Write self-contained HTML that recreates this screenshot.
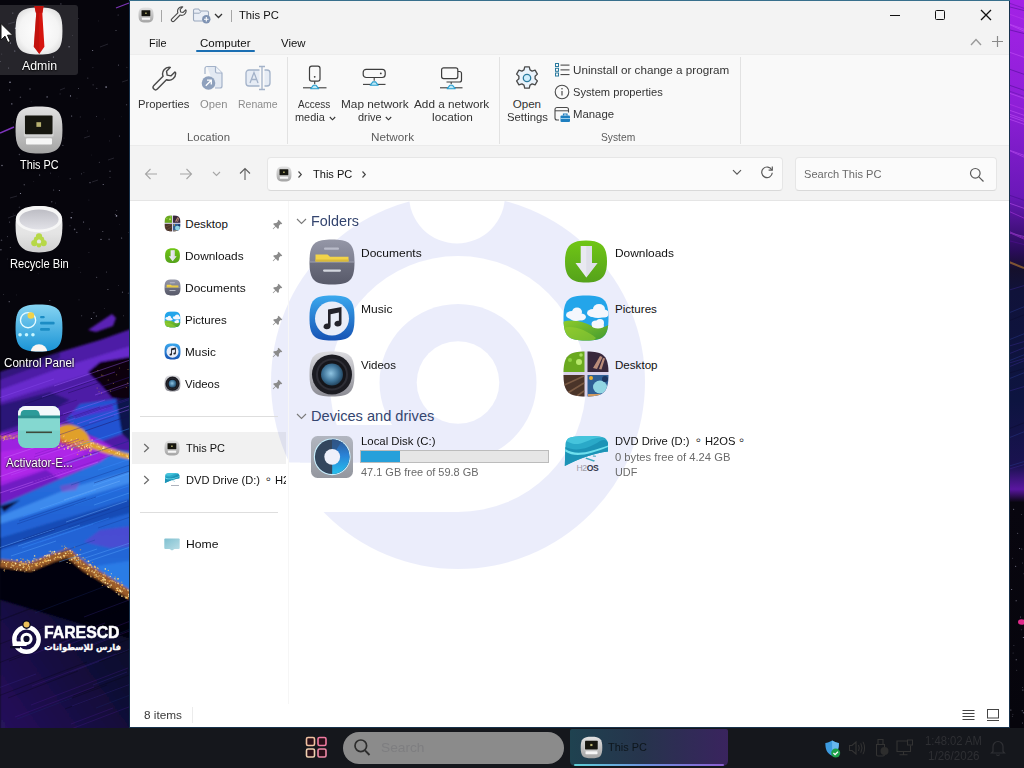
<!DOCTYPE html>
<html lang="en">
<head>
<meta charset="utf-8">
<title>This PC</title>
<style>
*{box-sizing:border-box;margin:0;padding:0}
html,body{width:1024px;height:768px;overflow:hidden;background:#06050c}
body{position:relative;font-family:"Liberation Sans","DejaVu Sans",sans-serif;font-size:11.6px;color:#111}
.a{position:absolute}
.t{position:absolute;white-space:nowrap;line-height:14px;height:14px;display:block;transform-origin:0 50%}
.rb{color:#333}
.g{color:#8c8c8c}
.sub{color:#6a6a6a}
.lb{color:#5c5c5c}
.hd{color:#34456f;font-size:14.6px}
.dt{color:#fff;font-size:12px;text-shadow:0 1px 2px rgba(0,0,0,.9),0 0 2px rgba(0,0,0,.8)}
#win{position:absolute;left:129px;top:0;width:881px;height:728px;background:#17324c;border-top:1px solid #376f8c}
#winin{position:absolute;left:1px;top:0;width:879px;height:726px;background:#f3f3f3;overflow:hidden}
#pg{position:absolute;left:-130px;top:-1px;width:1024px;height:768px}
.box{position:absolute;background:#fbfbfb;border:1px solid #e6e6e6;border-bottom-color:#d9d9d9;border-radius:4px}
.sep{position:absolute;width:1px;background:#e2e2e2}
.hl{position:absolute;height:1px;background:#dedede}
#taskbar{position:absolute;left:0;top:728px;width:1024px;height:40px;background:#15171c}
svg{display:block}
.ic{position:absolute}
</style>
</head>
<body>
<svg width="0" height="0" style="position:absolute">
<defs>
<!-- squircle path in 48 box: from 1.5 to 46.5 -->
<path id="sq" d="M24 1.5 C42 1.5 46.5 6 46.5 24 C46.5 42 42 46.5 24 46.5 C6 46.5 1.5 42 1.5 24 C1.5 6 6 1.5 24 1.5 Z"/>
<clipPath id="sqc"><use href="#sq"/></clipPath>
<linearGradient id="gDoc" x1="0" y1="0" x2="0" y2="1"><stop offset="0" stop-color="#9496a6"/><stop offset=".5" stop-color="#7f8192"/><stop offset=".52" stop-color="#6c6e7e"/><stop offset="1" stop-color="#585a6a"/></linearGradient>
<linearGradient id="gMus" x1="0" y1="0" x2="0" y2="1"><stop offset="0" stop-color="#3aa8ee"/><stop offset="1" stop-color="#1753b4"/></linearGradient>
<linearGradient id="gVid" x1="0" y1="0" x2="0" y2="1"><stop offset="0" stop-color="#dcdce0"/><stop offset="1" stop-color="#8b8b93"/></linearGradient>
<radialGradient id="gLens" cx=".45" cy=".45" r=".6"><stop offset="0" stop-color="#8fc4e2"/><stop offset=".6" stop-color="#3f7499"/><stop offset="1" stop-color="#1d3c55"/></radialGradient>
<linearGradient id="gDl" x1="0" y1="0" x2="0" y2="1"><stop offset="0" stop-color="#70c615"/><stop offset="1" stop-color="#55a21b"/></linearGradient>
<linearGradient id="gHill" x1="0" y1="0" x2="1" y2="1"><stop offset="0" stop-color="#8fcc2a"/><stop offset="1" stop-color="#3c9630"/></linearGradient>
<linearGradient id="gPc" x1="0" y1="0" x2="0" y2="1"><stop offset="0" stop-color="#e2e2e2"/><stop offset="1" stop-color="#a4a4a4"/></linearGradient>
<linearGradient id="gCp" x1="0" y1="0" x2="0" y2="1"><stop offset="0" stop-color="#86d4f2"/><stop offset="1" stop-color="#1a94d6"/></linearGradient>
<radialGradient id="gAdm" cx=".5" cy=".5" r=".6"><stop offset="0" stop-color="#ffffff"/><stop offset=".7" stop-color="#f4f4f4"/><stop offset="1" stop-color="#dcdcdc"/></radialGradient>
<linearGradient id="gDisk" x1="0" y1="0" x2="0" y2="1"><stop offset="0" stop-color="#b2b6c0"/><stop offset="1" stop-color="#94979f"/></linearGradient>

<symbol id="i-doc" viewBox="0 0 48 48">
  <use href="#sq" fill="url(#gDoc)"/>
  <g clip-path="url(#sqc)">
    <rect x="0" y="23.5" width="48" height="1" fill="#a9abb8" opacity=".7"/>
    <rect x="16" y="9.5" width="15" height="2.2" rx="1" fill="#b9bbc9"/>
    <path d="M7.5 16.5 h12 l2.5 2.2 h18.5 v4.8 h-33 z" fill="#f2d348"/>
    <rect x="7.5" y="21.5" width="33" height="2" fill="#d9b93a"/>
    <rect x="15" y="31.5" width="18" height="2.2" rx="1.1" fill="#d3d7df"/>
  </g>
</symbol>
<symbol id="i-mus" viewBox="0 0 48 48">
  <use href="#sq" fill="url(#gMus)"/>
  <circle cx="24" cy="24.5" r="17" fill="#e9edf8"/>
  <path d="M20 15.5 L33.5 13 V29.5 a3.6 2.9 -15 1 1 -2.6 -2.8 V18.6 L22.6 20.2 V32.3 a3.6 2.9 -15 1 1 -2.6 -2.8 Z" fill="#23232b"/>
</symbol>
<symbol id="i-vid" viewBox="0 0 48 48">
  <use href="#sq" fill="url(#gVid)"/>
  <circle cx="24" cy="24.5" r="20" fill="#1c1c22"/>
  <circle cx="24" cy="24.5" r="16" fill="#2e2e36"/>
  <circle cx="24" cy="24.5" r="14" fill="#15151a"/>
  <circle cx="24" cy="24.5" r="11" fill="url(#gLens)"/>
</symbol>
<symbol id="i-dl" viewBox="0 0 48 48">
  <path d="M24 3.5 C39 3.5 45 9 45 24.5 C45 40 39 45.5 24 45.5 C9 45.5 3 40 3 24.5 C3 9 9 3.5 24 3.5 Z" fill="url(#gDl)"/>
  <path d="M18.7 9 H30 V26 H35.5 L24.3 40.5 L13.5 26 H18.7 Z" fill="#e9e9f1"/>
  <path d="M24.3 9 H30 V26 H35.5 L24.3 40.5 Z" fill="#d9d9e4" opacity=".6"/>
</symbol>
<symbol id="i-pic" viewBox="0 0 48 48">
  <g clip-path="url(#sqc)">
    <rect width="48" height="48" fill="#23a5ea"/>
    <path d="M0 28 C10 25 20 27 30 32 C38 35 44 33 48 30 V48 H0 Z" fill="url(#gHill)"/>
    <path d="M0 34 C12 31 24 36 34 44 L30 48 H0 Z" fill="#9ad232" opacity=".55"/>
    <g fill="#f4f7fd">
      <ellipse cx="10" cy="21" rx="6" ry="4"/><ellipse cx="15" cy="18" rx="5" ry="4.5"/><ellipse cx="19" cy="23" rx="5" ry="3.5"/><ellipse cx="14" cy="24" rx="6" ry="3"/>
      <ellipse cx="31" cy="19" rx="6" ry="4"/><ellipse cx="37" cy="15" rx="6" ry="5"/><ellipse cx="42" cy="19.5" rx="5" ry="4"/><ellipse cx="36" cy="21" rx="8" ry="3"/>
      <ellipse cx="34" cy="30" rx="4.5" ry="3.5"/><ellipse cx="38" cy="29" rx="4" ry="4"/><ellipse cx="36" cy="32" rx="6" ry="2.5"/>
    </g>
  </g>
</symbol>
<symbol id="i-desk" viewBox="0 0 48 48">
  <g clip-path="url(#sqc)">
    <rect width="48" height="48" fill="#d9d2ea"/>
    <rect x="0" y="0" width="22.5" height="22" fill="#6aa91f"/>
    <circle cx="17" cy="12" r="3" fill="#b7e86a"/><circle cx="8" cy="10" r="2" fill="#8fd040"/><circle cx="19" cy="5" r="1.8" fill="#a8e060"/>
    <rect x="25.5" y="0" width="22.5" height="22" fill="#38283c"/>
    <path d="M31 18 L38 6 L40.5 7 L35 19 Z M37 19 l4 -11 l2 .5 l-3.5 11z" fill="#d9a58a" opacity=".8"/>
    <rect x="0" y="25" width="22.5" height="23" fill="#4a3429"/>
    <path d="M0 36 L22 26 M4 44 L22 33 M12 48 L22 41" stroke="#7a5a44" stroke-width="1.6"/>
    <rect x="25.5" y="25" width="22.5" height="23" fill="#2f5f94"/>
    <ellipse cx="38" cy="37" rx="7" ry="6.5" fill="#92d6e2"/><circle cx="29" cy="28" r="2" fill="#e8b030"/><circle cx="43" cy="29" r="3" fill="#1c3560"/><path d="M26 44 h12 v4 h-12z" fill="#d09a60"/>
  </g>
</symbol>
<symbol id="i-pc" viewBox="0 0 48 48">
  <use href="#sq" fill="url(#gPc)"/>
  <rect x="9.5" y="9.5" width="28.5" height="21" rx="1.5" fill="#d2d2d2"/>
  <rect x="10.5" y="10" width="26.5" height="18" rx="1" fill="#16160f"/>
  <rect x="21.5" y="16.5" width="4.5" height="4.500" fill="#c9c27a" opacity=".9"/>
  <rect x="11.500" y="32" width="25" height="6" rx="1" fill="#f6f6f6"/>
</symbol>
<symbol id="i-disk" viewBox="0 0 48 48">
  <linearGradient id="gDk2" x1="0" y1="0" x2="0" y2="1"><stop offset="0" stop-color="#2d5a98"/><stop offset=".45" stop-color="#2a82d6"/><stop offset="1" stop-color="#25c0ee"/></linearGradient>
  <rect x="3" y="3" width="42" height="42" rx="6.500" fill="url(#gDisk)"/>
  <circle cx="24.200" cy="23.800" r="18.400" fill="#c9f0ff"/>
  <circle cx="24.200" cy="23.800" r="17.300" fill="#33465d"/>
  <path d="M24.200 6.500 A17.300 17.300 0 0 1 24.200 41.100 Z" fill="url(#gDk2)"/>
  <path d="M24.200 6.500 A17.300 17.300 0 0 1 33 8.900 L24.200 23.800 Z" fill="#31527f" opacity=".7"/>
  <circle cx="24.200" cy="23.800" r="7.900" fill="#eef0fa"/>
</symbol>
<symbol id="i-h2" viewBox="0 0 48 48">
  <path d="M3.500 11 C4 6 8 4 14 3.500 C22 2.700 34 2.500 40 4 C44.500 5 46 8 46 12 V18.500 C32 20 16 26 2.800 33 Z" fill="#2aa9c8"/>
  <path d="M3.400 14 C14 19 26 16 38 8 C42 6 45 7 46 10 V18.500 C32 20 16 26 2.800 33 Z" fill="#1c93b6"/>
  <path d="M3.300 16 C14 23 28 19 46 12.500 V14 C28 21 14 25.500 3.200 18.500 Z" fill="#6fe0ee"/>
  <path d="M8 4.500 C18 2.500 34 2.500 41 4.500 C30 4 24 10 16 11 C10 11.500 6 9 4.500 8 C5 6 6 5 8 4.500Z" fill="#45c4dc"/>
  <path d="M24 24.500 l9 3 l-1 1.200 l-8.500 -3z M31 22.500 l3 .3 l-.2 1 l-3 -.3z" fill="#3aa6c0"/>
</symbol>
<symbol id="i-adm" viewBox="0 0 48 48">
  <use href="#sq" fill="url(#gAdm)"/>
  <path d="M19.500 0 H28.500 L27.200 7.500 L29.200 39 L24.300 46 L19 39 L21.300 7.500 Z" fill="#d6150f"/>
  <path d="M19.500 0 H24 L24.300 46 L19 39 L21.300 7.500 Z" fill="#b3100c" opacity=".55"/>
  <path d="M20 0 H28 L27.200 6.500 H21 Z" fill="#c0120d"/>
</symbol>
<symbol id="i-bin" viewBox="0 0 48 48">
  <linearGradient id="gBin" x1="0" y1="0" x2="0" y2="1"><stop offset="0" stop-color="#ececec"/><stop offset=".6" stop-color="#e4e4e4"/><stop offset="1" stop-color="#cfcfcf"/></linearGradient>
  <linearGradient id="gBinI" x1="0" y1="0" x2="0" y2="1"><stop offset="0" stop-color="#bdbdc4"/><stop offset="1" stop-color="#e2e2e8"/></linearGradient>
  <path d="M24 2 C42 2 46.500 8 46.500 20 C46.500 40 41 46.500 24 46.500 C7 46.500 1.500 40 1.500 20 C1.500 8 6 2 24 2 Z" fill="url(#gBin)"/>
  <ellipse cx="24" cy="14.500" rx="22.300" ry="12.500" fill="#f6f6f6"/>
  <ellipse cx="24" cy="14.800" rx="18.800" ry="9.600" fill="url(#gBinI)"/>
  <g fill="#b7d848"><circle cx="24" cy="31" r="3"/><circle cx="19.500" cy="37.500" r="3"/><circle cx="28.500" cy="37.500" r="3"/><circle cx="21.300" cy="33.800" r="2.300"/><circle cx="26.700" cy="33.800" r="2.300"/><circle cx="24" cy="39.500" r="2.200"/></g>
  <circle cx="24" cy="36" r="2" fill="#e6e6e6"/>
</symbol>
<symbol id="i-cp" viewBox="0 0 48 48">
  <use href="#sq" fill="url(#gCp)"/>
  <g clip-path="url(#sqc)">
    <circle cx="13.500" cy="16.500" r="7.300" fill="none" stroke="#e6fbff" stroke-width="1.300"/>
    <circle cx="16.200" cy="12" r="3.200" fill="#f0d24a"/>
    <rect x="25" y="12.500" width="4.500" height="2.200" rx="1" fill="#1b8cc4"/>
    <rect x="25" y="18" width="14" height="2.600" rx="1" fill="#1b8cc4"/>
    <rect x="25" y="24" width="9.500" height="2.600" rx="1" fill="#1b8cc4"/>
    <circle cx="5.800" cy="30.500" r="1.700" fill="#c8f6ff"/><circle cx="12" cy="30.500" r="1.700" fill="#c8f6ff"/><circle cx="18.200" cy="30.500" r="1.700" fill="#c8f6ff"/>
    <circle cx="24" cy="47.500" r="8" fill="#fbf6f2"/>
  </g>
</symbol>
<symbol id="i-act" viewBox="0 0 48 48">
  <clipPath id="actc"><rect x="3" y="3" width="42" height="42" rx="7.500"/></clipPath>
  <g clip-path="url(#actc)">
    <rect x="3" y="3" width="42" height="42" fill="#79d0c9"/>
    <rect x="3" y="3" width="42" height="10" fill="#f4f8fb"/>
    <path d="M5.500 13 C5.500 8.500 7 7 10 7 H21 C23 7 24.500 9 25 13 Z" fill="#2c9b99"/>
    <rect x="3" y="12.500" width="42" height="3" fill="#2a8f8d"/>
    <rect x="3" y="15.500" width="42" height="12" fill="#84d8d0"/>
    <rect x="11" y="28.500" width="26" height="1.600" fill="#3d4a3a"/>
  </g>
</symbol>
<symbol id="i-home" viewBox="0 0 16 16">
  <linearGradient id="gHome" x1="0" y1="0" x2="1" y2="1"><stop offset="0" stop-color="#7fc0d0"/><stop offset="1" stop-color="#b9dde6"/></linearGradient>
  <rect x=".3" y="2.500" width="15.400" height="10.500" rx="1" fill="url(#gHome)"/>
  <path d="M5.500 13 h5 l-2.500 1.500z" fill="#a9d4de"/>
</symbol>
<symbol id="i-pin" viewBox="0 0 12 12">
  <path d="M7.200 .8 L11.200 4.800 L10.200 5.800 L9.400 5.500 L7.600 7.300 L7.500 9.800 L6.500 10.800 L4.100 8.400 L1.300 11.200 L.8 10.700 L3.600 7.900 L1.200 5.500 L2.200 4.500 L4.700 4.400 L6.500 2.600 L6.200 1.800 Z" fill="#8b8b8b"/>
</symbol>
</defs>
</svg>
<svg id="wall" width="1024" height="728" viewBox="0 0 1024 728" style="position:absolute;left:0;top:0">
<defs><filter id="b1" x="-10%" y="-10%" width="120%" height="120%"><feGaussianBlur stdDeviation="1"/></filter>
<linearGradient id="wr" x1="0" y1="0" x2="0" y2="1"><stop offset="0" stop-color="#a322e6"/><stop offset=".14" stop-color="#8f1fd8"/><stop offset=".27" stop-color="#6a18b8"/><stop offset=".345" stop-color="#2a0c5a"/><stop offset=".37" stop-color="#15102c"/><stop offset=".40" stop-color="#10123a"/><stop offset=".55" stop-color="#0d1440"/><stop offset=".64" stop-color="#1a1250"/><stop offset=".672" stop-color="#5a16a0"/><stop offset=".69" stop-color="#08060f"/><stop offset="1" stop-color="#06050c"/></linearGradient>
<linearGradient id="wlb" x1="1" y1="0" x2="0" y2="1"><stop offset="0" stop-color="#07071a"/><stop offset=".45" stop-color="#0f0e34"/><stop offset="1" stop-color="#26125c"/></linearGradient>
<linearGradient id="wbl" x1="0" y1="0" x2="0" y2="1"><stop offset="0" stop-color="#2b76e2"/><stop offset=".5" stop-color="#2062d4"/><stop offset="1" stop-color="#286cda"/></linearGradient>
<clipPath id="lc"><rect x="0" y="0" width="130" height="728"/></clipPath>
</defs>
<rect width="1024" height="728" fill="#06050c"/>
<g clip-path="url(#lc)">
<g filter="url(#b1)">
<rect x="0" y="540" width="134" height="190" fill="url(#wlb)"/>
<path d="M134 328 L100 340 L60 352 L0 372 L0 470 L134 470 Z" fill="#4d1fa6"/>
<path d="M134 345 L60 368 L0 390 L0 402 L70 380 L134 360 Z" fill="#6e30d6" opacity=".8"/>
<path d="M0 405 L50 392 L70 400 L40 418 L0 432 Z" fill="#2c1578"/>
<path d="M0 372 L60 352 L60 358 L0 380 Z" fill="#2a1070" opacity=".8"/>
<path d="M88 330 L112 314 L116 318 L113 326 L96 332 Z" fill="#5a22b4"/>
<path d="M134 356 L100 362 L88 372 L100 384 L112 398 L134 402 Z" fill="#07060f"/>
<path d="M134 398 L116 400 L120 432 L134 445 Z" fill="#10164e"/>
<path d="M66 420 L80 404 L116 399 L122 434 L102 441 L84 432 Z" fill="#2153d2"/>
<path d="M70 412 L112 404 L114 410 L74 418 Z" fill="#5a2ad0" opacity=".8"/>
<path d="M0 434 L60 424 L100 440 L118 450 L100 462 L60 479 L0 505 Z" fill="#9d22e0"/>
<path d="M0 452 L50 444 L86 452 L60 464 L0 482 Z" fill="#b42aea" opacity=".8"/>
<path d="M0 486 L46 470 L60 479 L0 505 Z" fill="#6a1cc0" opacity=".9"/>
<path d="M134 452 L116 450 L100 462 L60 479 L0 505 L0 563 L30 567 L52 558 L68 553 L85 567 L105 579 L134 597 Z" fill="url(#wbl)"/>
<path d="M134 470 L70 488 L0 516 L0 524 L80 498 L134 482 Z" fill="#4a9af6" opacity=".7"/>
<path d="M134 498 L60 520 L0 538 L0 550 L70 530 L134 512 Z" fill="#1748b0" opacity=".85"/>
<path d="M0 506 L20 500 L4 512 Z" fill="#0a0a30"/>
<path d="M134 526 L100 530 L84 542 L110 548 L134 546 Z" fill="#6a3ad0" opacity=".55"/>
<path d="M60 486 L80 482 L76 490 L62 492 Z" fill="#a040c0" opacity=".5"/>
<path d="M134 560 L96 566 L110 580 L134 594 Z" fill="#2a80ea" opacity=".8"/>
<path d="M0 563 L30 567 L52 558 L68 553 L85 567 L105 579 L134 597 L134 640 L0 600 Z" fill="#05050c"/>
<path d="M58 428 C64 423 72 424 80 428 C86 431 89 436 90 441 C100 445 112 450 134 455 L134 460 C112 456 98 451 88 447 C80 446 70 445 60 440 Z" fill="#e0a02a"/>
<path d="M60 438 C70 443 80 445 90 446 L88 450 C78 450 68 447 58 442 Z" fill="#d0602c" opacity=".75"/>
<path d="M0 438 C22 436 44 431 58 427" fill="none" stroke="#d98a3a" stroke-width="3" stroke-dasharray="2 1.500" opacity=".8"/>
<path d="M0 563 L30 567 L52 558 L68 553 L85 567 L105 579 L134 597" fill="none" stroke="#9a5c2a" stroke-width="8" stroke-linejoin="round"/>
</g>
<circle cx="62.0" cy="546.1" r="0.66" fill="#f0c060" opacity="0.60"/>
<circle cx="108.8" cy="577.1" r="0.66" fill="#f0c060" opacity="0.60"/>
<circle cx="64.2" cy="556.0" r="0.85" fill="#f6d88a" opacity="1.00"/>
<circle cx="126.9" cy="597.3" r="0.88" fill="#f0c060" opacity="1.00"/>
<circle cx="2.4" cy="561.1" r="0.54" fill="#f0c060" opacity="1.00"/>
<circle cx="4.4" cy="562.4" r="0.66" fill="#ffe8a8" opacity="1.00"/>
<circle cx="114.7" cy="578.7" r="0.67" fill="#f6d88a" opacity="0.80"/>
<circle cx="88.7" cy="567.5" r="0.63" fill="#f6d88a" opacity="1.00"/>
<circle cx="36.8" cy="563.4" r="0.46" fill="#f6d88a" opacity="0.80"/>
<circle cx="16.3" cy="559.9" r="0.58" fill="#f6d88a" opacity="0.60"/>
<circle cx="111.1" cy="585.1" r="0.86" fill="#ffe8a8" opacity="0.80"/>
<circle cx="128.6" cy="594.4" r="0.63" fill="#f6d88a" opacity="1.00"/>
<circle cx="84.9" cy="566.5" r="0.49" fill="#e89a40" opacity="0.60"/>
<circle cx="128.2" cy="590.7" r="0.79" fill="#f6d88a" opacity="0.60"/>
<circle cx="36.1" cy="564.6" r="0.81" fill="#f0c060" opacity="1.00"/>
<circle cx="76.7" cy="560.1" r="0.65" fill="#f0c060" opacity="1.00"/>
<circle cx="104.5" cy="574.2" r="0.63" fill="#f0c060" opacity="0.60"/>
<circle cx="39.5" cy="563.9" r="0.89" fill="#e89a40" opacity="0.60"/>
<circle cx="28.8" cy="560.7" r="0.74" fill="#f6d88a" opacity="0.60"/>
<circle cx="127.3" cy="598.6" r="0.55" fill="#e89a40" opacity="0.60"/>
<circle cx="104.0" cy="575.8" r="0.48" fill="#f6d88a" opacity="0.60"/>
<circle cx="78.2" cy="563.7" r="0.56" fill="#e89a40" opacity="0.80"/>
<circle cx="82.3" cy="567.9" r="0.82" fill="#f0c060" opacity="0.80"/>
<circle cx="26.3" cy="568.9" r="0.52" fill="#f0c060" opacity="1.00"/>
<circle cx="36.9" cy="565.5" r="0.87" fill="#f0c060" opacity="1.00"/>
<circle cx="121.9" cy="596.2" r="0.85" fill="#f6d88a" opacity="0.80"/>
<circle cx="6.5" cy="566.1" r="0.56" fill="#ffe8a8" opacity="0.80"/>
<circle cx="60.6" cy="557.1" r="0.86" fill="#ffe8a8" opacity="0.80"/>
<circle cx="67.1" cy="562.6" r="0.51" fill="#ffe8a8" opacity="1.00"/>
<circle cx="90.3" cy="564.4" r="0.73" fill="#f6d88a" opacity="0.80"/>
<circle cx="32.9" cy="570.2" r="0.48" fill="#ffe8a8" opacity="0.80"/>
<circle cx="34.9" cy="560.8" r="0.47" fill="#e89a40" opacity="0.80"/>
<circle cx="73.0" cy="558.0" r="0.51" fill="#ffe8a8" opacity="0.80"/>
<circle cx="88.8" cy="568.0" r="0.76" fill="#f0c060" opacity="1.00"/>
<circle cx="4.1" cy="570.3" r="0.77" fill="#f6d88a" opacity="0.60"/>
<circle cx="81.1" cy="563.9" r="0.48" fill="#f6d88a" opacity="1.00"/>
<circle cx="44.9" cy="560.9" r="0.65" fill="#e89a40" opacity="1.00"/>
<circle cx="6.4" cy="563.9" r="0.87" fill="#f0c060" opacity="0.80"/>
<circle cx="49.0" cy="555.0" r="0.84" fill="#ffe8a8" opacity="0.60"/>
<circle cx="118.3" cy="578.8" r="0.71" fill="#ffe8a8" opacity="0.80"/>
<circle cx="80.5" cy="560.9" r="0.74" fill="#e89a40" opacity="0.80"/>
<circle cx="98.1" cy="572.8" r="0.62" fill="#ffe8a8" opacity="0.80"/>
<circle cx="64.5" cy="548.8" r="0.68" fill="#e89a40" opacity="1.00"/>
<circle cx="13.0" cy="562.6" r="0.46" fill="#f6d88a" opacity="0.80"/>
<circle cx="105.3" cy="575.7" r="0.85" fill="#e89a40" opacity="0.80"/>
<circle cx="21.4" cy="561.4" r="0.73" fill="#f0c060" opacity="0.80"/>
<circle cx="92.6" cy="562.5" r="0.60" fill="#e89a40" opacity="0.60"/>
<circle cx="84.4" cy="568.7" r="0.81" fill="#f0c060" opacity="0.60"/>
<circle cx="53.9" cy="553.6" r="0.51" fill="#ffe8a8" opacity="0.80"/>
<circle cx="112.1" cy="581.0" r="0.83" fill="#f6d88a" opacity="0.80"/>
<circle cx="107.6" cy="583.5" r="0.87" fill="#ffe8a8" opacity="0.80"/>
<circle cx="83.1" cy="567.8" r="0.67" fill="#e89a40" opacity="1.00"/>
<circle cx="109.3" cy="585.6" r="0.48" fill="#f6d88a" opacity="0.80"/>
<circle cx="115.8" cy="584.9" r="0.47" fill="#e89a40" opacity="1.00"/>
<circle cx="49.4" cy="555.2" r="0.74" fill="#ffe8a8" opacity="0.80"/>
<circle cx="28.3" cy="562.1" r="0.80" fill="#e89a40" opacity="0.60"/>
<circle cx="102.6" cy="580.0" r="0.50" fill="#f6d88a" opacity="1.00"/>
<circle cx="80.5" cy="549.8" r="0.74" fill="#e89a40" opacity="0.60"/>
<circle cx="91.5" cy="571.3" r="0.53" fill="#f6d88a" opacity="0.80"/>
<circle cx="72.0" cy="560.1" r="0.47" fill="#f0c060" opacity="0.80"/>
<circle cx="108.3" cy="570.4" r="0.68" fill="#f0c060" opacity="0.80"/>
<circle cx="113.8" cy="581.6" r="0.76" fill="#f0c060" opacity="0.60"/>
<circle cx="59.1" cy="557.6" r="0.65" fill="#f0c060" opacity="1.00"/>
<circle cx="118.5" cy="584.7" r="0.45" fill="#e89a40" opacity="0.80"/>
<circle cx="47.2" cy="560.7" r="0.84" fill="#f6d88a" opacity="0.60"/>
<circle cx="35.1" cy="563.7" r="0.63" fill="#f6d88a" opacity="0.80"/>
<circle cx="74.1" cy="558.0" r="0.86" fill="#f6d88a" opacity="0.80"/>
<circle cx="72.8" cy="552.1" r="0.47" fill="#e89a40" opacity="1.00"/>
<circle cx="59.5" cy="553.4" r="0.55" fill="#f6d88a" opacity="0.80"/>
<circle cx="102.3" cy="585.5" r="0.53" fill="#e89a40" opacity="1.00"/>
<circle cx="104.5" cy="579.2" r="0.68" fill="#ffe8a8" opacity="0.80"/>
<circle cx="78.4" cy="562.6" r="0.76" fill="#f0c060" opacity="0.80"/>
<circle cx="74.3" cy="555.4" r="0.74" fill="#e89a40" opacity="0.80"/>
<circle cx="87.6" cy="574.0" r="0.88" fill="#f0c060" opacity="0.80"/>
<circle cx="110.5" cy="586.9" r="0.71" fill="#f0c060" opacity="0.80"/>
<circle cx="75.0" cy="556.7" r="0.68" fill="#ffe8a8" opacity="0.60"/>
<circle cx="70.0" cy="563.4" r="0.69" fill="#f6d88a" opacity="0.80"/>
<circle cx="13.4" cy="565.9" r="0.53" fill="#ffe8a8" opacity="0.80"/>
<circle cx="120.7" cy="590.2" r="0.56" fill="#ffe8a8" opacity="0.60"/>
<circle cx="47.2" cy="555.3" r="0.86" fill="#ffe8a8" opacity="1.00"/>
<circle cx="46.0" cy="561.3" r="0.87" fill="#f0c060" opacity="1.00"/>
<circle cx="101.8" cy="581.4" r="0.46" fill="#f0c060" opacity="0.60"/>
<circle cx="32.6" cy="563.6" r="0.61" fill="#ffe8a8" opacity="0.60"/>
<circle cx="72.2" cy="551.7" r="0.71" fill="#e89a40" opacity="1.00"/>
<circle cx="29.4" cy="562.2" r="0.62" fill="#ffe8a8" opacity="1.00"/>
<circle cx="84.0" cy="564.3" r="0.69" fill="#f0c060" opacity="1.00"/>
<circle cx="29.9" cy="561.2" r="0.51" fill="#e89a40" opacity="0.60"/>
<circle cx="44.7" cy="558.6" r="0.59" fill="#f0c060" opacity="0.60"/>
<circle cx="103.7" cy="577.9" r="0.85" fill="#f0c060" opacity="1.00"/>
<circle cx="12.7" cy="565.2" r="0.62" fill="#ffe8a8" opacity="0.80"/>
<circle cx="75.7" cy="557.5" r="0.73" fill="#f6d88a" opacity="0.60"/>
<circle cx="29.7" cy="563.7" r="0.76" fill="#e89a40" opacity="0.60"/>
<circle cx="95.8" cy="570.0" r="0.90" fill="#f0c060" opacity="0.60"/>
<circle cx="69.9" cy="550.4" r="0.46" fill="#ffe8a8" opacity="0.60"/>
<circle cx="27.6" cy="567.3" r="0.52" fill="#e89a40" opacity="1.00"/>
<circle cx="13.8" cy="565.3" r="0.48" fill="#ffe8a8" opacity="0.60"/>
<circle cx="103.2" cy="574.8" r="0.68" fill="#ffe8a8" opacity="0.60"/>
<circle cx="79.7" cy="566.1" r="0.46" fill="#f6d88a" opacity="0.60"/>
<circle cx="27.3" cy="560.1" r="0.63" fill="#f0c060" opacity="1.00"/>
<circle cx="24.0" cy="566.8" r="0.68" fill="#f6d88a" opacity="0.80"/>
<circle cx="117.0" cy="588.5" r="0.84" fill="#ffe8a8" opacity="1.00"/>
<circle cx="85.0" cy="559.3" r="0.68" fill="#e89a40" opacity="0.80"/>
<circle cx="41.8" cy="565.8" r="0.52" fill="#ffe8a8" opacity="0.60"/>
<circle cx="116.2" cy="590.5" r="0.85" fill="#e89a40" opacity="0.80"/>
<circle cx="104.8" cy="572.4" r="0.48" fill="#e89a40" opacity="0.80"/>
<circle cx="67.5" cy="555.4" r="0.45" fill="#e89a40" opacity="1.00"/>
<circle cx="117.7" cy="590.0" r="0.88" fill="#e89a40" opacity="0.80"/>
<circle cx="31.9" cy="566.2" r="0.63" fill="#f0c060" opacity="1.00"/>
<circle cx="11.8" cy="559.4" r="0.55" fill="#f6d88a" opacity="0.80"/>
<circle cx="128.8" cy="594.0" r="0.46" fill="#f6d88a" opacity="1.00"/>
<circle cx="32.9" cy="560.6" r="0.79" fill="#ffe8a8" opacity="0.60"/>
<circle cx="14.2" cy="565.3" r="0.56" fill="#e89a40" opacity="1.00"/>
<circle cx="77.3" cy="554.9" r="0.83" fill="#f6d88a" opacity="1.00"/>
<circle cx="63.7" cy="555.6" r="0.74" fill="#f6d88a" opacity="0.80"/>
<circle cx="121.3" cy="591.9" r="0.53" fill="#ffe8a8" opacity="1.00"/>
<circle cx="80.9" cy="567.0" r="0.48" fill="#ffe8a8" opacity="0.80"/>
<circle cx="40.0" cy="559.3" r="0.69" fill="#ffe8a8" opacity="1.00"/>
<circle cx="39.6" cy="564.0" r="0.87" fill="#e89a40" opacity="0.60"/>
<circle cx="2.0" cy="562.3" r="0.52" fill="#ffe8a8" opacity="0.60"/>
<circle cx="118.0" cy="588.2" r="0.79" fill="#f6d88a" opacity="1.00"/>
<circle cx="128.9" cy="596.1" r="0.86" fill="#ffe8a8" opacity="1.00"/>
<circle cx="67.6" cy="551.6" r="0.89" fill="#f0c060" opacity="0.60"/>
<circle cx="69.8" cy="560.2" r="0.66" fill="#f0c060" opacity="1.00"/>
<circle cx="96.0" cy="570.1" r="0.47" fill="#ffe8a8" opacity="0.80"/>
<circle cx="17.0" cy="566.4" r="0.52" fill="#e89a40" opacity="0.80"/>
<circle cx="20.8" cy="562.2" r="0.64" fill="#e89a40" opacity="1.00"/>
<circle cx="83.1" cy="557.6" r="0.69" fill="#f0c060" opacity="0.80"/>
<circle cx="96.9" cy="576.6" r="0.56" fill="#f6d88a" opacity="1.00"/>
<circle cx="117.4" cy="587.8" r="0.61" fill="#e89a40" opacity="1.00"/>
<circle cx="94.7" cy="566.2" r="0.70" fill="#f0c060" opacity="1.00"/>
<circle cx="40.3" cy="562.4" r="0.68" fill="#f0c060" opacity="1.00"/>
<circle cx="4.6" cy="571.3" r="0.48" fill="#e89a40" opacity="0.80"/>
<circle cx="60.0" cy="553.3" r="0.69" fill="#f6d88a" opacity="0.60"/>
<circle cx="121.1" cy="587.7" r="0.52" fill="#f0c060" opacity="1.00"/>
<circle cx="130.6" cy="591.8" r="0.60" fill="#ffe8a8" opacity="1.00"/>
<circle cx="19.5" cy="564.9" r="0.84" fill="#f6d88a" opacity="0.80"/>
<circle cx="110.2" cy="576.4" r="0.55" fill="#ffe8a8" opacity="1.00"/>
<circle cx="35.7" cy="559.1" r="0.81" fill="#e89a40" opacity="0.60"/>
<circle cx="86.6" cy="570.6" r="0.70" fill="#f0c060" opacity="0.80"/>
<circle cx="88.4" cy="567.8" r="0.71" fill="#ffe8a8" opacity="0.80"/>
<circle cx="11.0" cy="567.4" r="0.67" fill="#ffe8a8" opacity="0.80"/>
<circle cx="108.3" cy="583.0" r="0.45" fill="#e89a40" opacity="0.60"/>
<circle cx="122.6" cy="585.0" r="0.67" fill="#e89a40" opacity="0.80"/>
<circle cx="118.5" cy="583.4" r="0.55" fill="#e89a40" opacity="0.80"/>
<circle cx="120.6" cy="586.8" r="0.72" fill="#e89a40" opacity="0.80"/>
<circle cx="71.7" cy="559.4" r="0.90" fill="#ffe8a8" opacity="0.80"/>
<circle cx="34.3" cy="570.2" r="0.68" fill="#f6d88a" opacity="0.80"/>
<circle cx="110.8" cy="580.6" r="0.46" fill="#ffe8a8" opacity="1.00"/>
<circle cx="55.5" cy="557.5" r="0.81" fill="#f0c060" opacity="1.00"/>
<circle cx="74.8" cy="563.1" r="0.53" fill="#ffe8a8" opacity="0.80"/>
<circle cx="108.0" cy="580.4" r="0.52" fill="#e89a40" opacity="0.60"/>
<circle cx="87.3" cy="568.8" r="0.81" fill="#f6d88a" opacity="1.00"/>
<circle cx="75.5" cy="558.6" r="0.49" fill="#f6d88a" opacity="0.80"/>
<circle cx="12.6" cy="562.2" r="0.74" fill="#f0c060" opacity="0.60"/>
<circle cx="100.7" cy="573.6" r="0.55" fill="#e89a40" opacity="0.80"/>
<circle cx="55.4" cy="553.7" r="0.60" fill="#e89a40" opacity="1.00"/>
<circle cx="20.9" cy="558.4" r="0.48" fill="#f6d88a" opacity="0.80"/>
<circle cx="101.1" cy="576.2" r="0.89" fill="#e89a40" opacity="0.60"/>
<circle cx="105.3" cy="582.7" r="0.88" fill="#f6d88a" opacity="1.00"/>
<circle cx="49.1" cy="551.3" r="0.45" fill="#f6d88a" opacity="0.80"/>
<circle cx="120.4" cy="591.4" r="0.52" fill="#ffe8a8" opacity="1.00"/>
<circle cx="24.7" cy="564.0" r="0.54" fill="#ffe8a8" opacity="1.00"/>
<circle cx="42.4" cy="562.2" r="0.59" fill="#f6d88a" opacity="0.80"/>
<circle cx="87.6" cy="567.3" r="0.80" fill="#f0c060" opacity="0.60"/>
<circle cx="98.8" cy="578.9" r="0.81" fill="#e89a40" opacity="0.60"/>
<circle cx="28.9" cy="566.3" r="0.61" fill="#f0c060" opacity="1.00"/>
<circle cx="97.3" cy="571.0" r="0.53" fill="#e89a40" opacity="0.80"/>
<circle cx="25.5" cy="564.0" r="0.79" fill="#e89a40" opacity="1.00"/>
<circle cx="74.8" cy="559.8" r="0.57" fill="#ffe8a8" opacity="0.80"/>
<circle cx="90.9" cy="565.3" r="0.80" fill="#f6d88a" opacity="0.80"/>
<circle cx="115.4" cy="582.8" r="0.51" fill="#ffe8a8" opacity="1.00"/>
<circle cx="105.2" cy="579.9" r="0.80" fill="#f6d88a" opacity="1.00"/>
<circle cx="118.6" cy="594.2" r="0.86" fill="#ffe8a8" opacity="0.60"/>
<circle cx="98.1" cy="568.6" r="0.72" fill="#f0c060" opacity="0.80"/>
<circle cx="23.1" cy="563.9" r="0.84" fill="#f0c060" opacity="1.00"/>
<circle cx="98.1" cy="576.7" r="0.73" fill="#f6d88a" opacity="0.60"/>
<circle cx="77.9" cy="561.5" r="0.86" fill="#f0c060" opacity="0.60"/>
<circle cx="11.8" cy="565.7" r="0.57" fill="#f6d88a" opacity="0.80"/>
<circle cx="90.7" cy="575.3" r="0.69" fill="#e89a40" opacity="0.60"/>
<circle cx="103.8" cy="580.7" r="0.64" fill="#f6d88a" opacity="0.80"/>
<circle cx="28.9" cy="562.0" r="0.52" fill="#e89a40" opacity="0.80"/>
<circle cx="44.1" cy="559.0" r="0.48" fill="#e89a40" opacity="0.80"/>
<circle cx="89.3" cy="570.0" r="0.51" fill="#ffe8a8" opacity="1.00"/>
<circle cx="65.7" cy="553.3" r="0.89" fill="#f6d88a" opacity="1.00"/>
<circle cx="64.3" cy="556.9" r="0.66" fill="#e89a40" opacity="1.00"/>
<circle cx="17.2" cy="560.1" r="0.80" fill="#f0c060" opacity="1.00"/>
<circle cx="23.0" cy="559.3" r="0.79" fill="#e89a40" opacity="0.80"/>
<circle cx="80.5" cy="554.6" r="0.49" fill="#f0c060" opacity="0.60"/>
<circle cx="54.2" cy="558.7" r="0.57" fill="#ffe8a8" opacity="1.00"/>
<circle cx="85.6" cy="568.6" r="0.65" fill="#ffe8a8" opacity="0.60"/>
<circle cx="15.1" cy="562.7" r="0.73" fill="#f0c060" opacity="0.60"/>
<circle cx="28.5" cy="564.5" r="0.47" fill="#ffe8a8" opacity="1.00"/>
<circle cx="94.2" cy="572.4" r="0.89" fill="#ffe8a8" opacity="0.80"/>
<circle cx="102.9" cy="577.3" r="0.60" fill="#ffe8a8" opacity="1.00"/>
<circle cx="20.3" cy="565.3" r="0.76" fill="#ffe8a8" opacity="0.80"/>
<circle cx="120.4" cy="590.9" r="0.73" fill="#ffe8a8" opacity="1.00"/>
<circle cx="90.9" cy="576.7" r="0.75" fill="#f6d88a" opacity="0.80"/>
<circle cx="47.0" cy="558.3" r="0.60" fill="#ffe8a8" opacity="0.60"/>
<circle cx="76.3" cy="560.0" r="0.58" fill="#f6d88a" opacity="1.00"/>
<circle cx="94.3" cy="575.1" r="0.56" fill="#e89a40" opacity="1.00"/>
<circle cx="32.8" cy="561.4" r="0.71" fill="#f0c060" opacity="1.00"/>
<circle cx="132.3" cy="593.6" r="0.77" fill="#f0c060" opacity="1.00"/>
<circle cx="125.2" cy="590.0" r="0.49" fill="#f0c060" opacity="0.80"/>
<circle cx="80.2" cy="559.9" r="0.76" fill="#e89a40" opacity="0.60"/>
<circle cx="123.8" cy="588.0" r="0.51" fill="#f0c060" opacity="0.60"/>
<circle cx="117.6" cy="590.4" r="0.69" fill="#f6d88a" opacity="1.00"/>
<circle cx="119.1" cy="591.2" r="0.85" fill="#e89a40" opacity="1.00"/>
<circle cx="20.7" cy="569.8" r="0.87" fill="#f6d88a" opacity="0.80"/>
<circle cx="94.2" cy="567.0" r="0.61" fill="#f0c060" opacity="0.60"/>
<circle cx="78.7" cy="566.6" r="0.82" fill="#ffe8a8" opacity="0.60"/>
<circle cx="57.8" cy="556.9" r="0.90" fill="#f0c060" opacity="0.80"/>
<circle cx="105.3" cy="569.0" r="0.83" fill="#ffe8a8" opacity="1.00"/>
<circle cx="80.7" cy="562.8" r="0.54" fill="#ffe8a8" opacity="0.60"/>
<circle cx="21.0" cy="564.2" r="0.62" fill="#ffe8a8" opacity="0.60"/>
<circle cx="48.6" cy="560.3" r="0.87" fill="#f6d88a" opacity="1.00"/>
<circle cx="103.8" cy="579.5" r="0.77" fill="#f0c060" opacity="0.80"/>
<circle cx="127.9" cy="590.0" r="0.64" fill="#ffe8a8" opacity="0.80"/>
<circle cx="70.2" cy="550.8" r="0.90" fill="#ffe8a8" opacity="0.80"/>
<circle cx="16.4" cy="570.5" r="0.60" fill="#ffe8a8" opacity="0.80"/>
<circle cx="116.3" cy="592.4" r="0.59" fill="#f6d88a" opacity="0.80"/>
<circle cx="95.0" cy="577.3" r="0.72" fill="#e89a40" opacity="1.00"/>
<circle cx="118.0" cy="582.9" r="0.56" fill="#ffe8a8" opacity="0.60"/>
<circle cx="71.3" cy="553.5" r="0.76" fill="#f0c060" opacity="1.00"/>
<circle cx="44.1" cy="561.0" r="0.63" fill="#f0c060" opacity="0.60"/>
<circle cx="131.4" cy="595.2" r="0.62" fill="#ffe8a8" opacity="1.00"/>
<circle cx="111.3" cy="573.8" r="0.55" fill="#ffe8a8" opacity="1.00"/>
<circle cx="17.5" cy="568.2" r="0.51" fill="#ffe8a8" opacity="0.60"/>
<circle cx="43.2" cy="562.6" r="0.78" fill="#f6d88a" opacity="0.80"/>
<circle cx="25.7" cy="561.8" r="0.69" fill="#f0c060" opacity="0.80"/>
<circle cx="92.4" cy="572.1" r="0.55" fill="#e89a40" opacity="0.60"/>
<circle cx="64.2" cy="551.9" r="0.51" fill="#ffe8a8" opacity="0.60"/>
<circle cx="29.3" cy="568.8" r="0.84" fill="#f6d88a" opacity="0.60"/>
<circle cx="47.0" cy="564.2" r="0.46" fill="#f0c060" opacity="1.00"/>
<circle cx="88.5" cy="561.3" r="0.54" fill="#f6d88a" opacity="1.00"/>
<circle cx="15.6" cy="563.6" r="0.86" fill="#ffe8a8" opacity="1.00"/>
<circle cx="118.0" cy="583.4" r="0.60" fill="#ffe8a8" opacity="0.80"/>
<circle cx="11.5" cy="564.0" r="0.77" fill="#f0c060" opacity="0.80"/>
<circle cx="26.1" cy="568.5" r="0.56" fill="#e89a40" opacity="0.80"/>
<circle cx="51.8" cy="553.1" r="0.72" fill="#f0c060" opacity="0.80"/>
<circle cx="121.8" cy="582.1" r="0.53" fill="#f0c060" opacity="0.80"/>
<circle cx="19.7" cy="562.7" r="0.48" fill="#f6d88a" opacity="1.00"/>
<circle cx="121.7" cy="585.4" r="0.45" fill="#e89a40" opacity="1.00"/>
<circle cx="36.5" cy="563.9" r="0.58" fill="#f0c060" opacity="0.60"/>
<circle cx="26.5" cy="564.1" r="0.78" fill="#f6d88a" opacity="0.60"/>
<circle cx="103.0" cy="582.0" r="0.73" fill="#ffe8a8" opacity="0.60"/>
<circle cx="119.0" cy="595.0" r="0.67" fill="#f0c060" opacity="0.60"/>
<circle cx="78.1" cy="557.7" r="0.75" fill="#f6d88a" opacity="1.00"/>
<circle cx="40.9" cy="558.7" r="0.82" fill="#f0c060" opacity="1.00"/>
<circle cx="102.9" cy="579.6" r="0.56" fill="#ffe8a8" opacity="1.00"/>
<circle cx="101.2" cy="580.6" r="0.80" fill="#f0c060" opacity="0.80"/>
<circle cx="68.6" cy="553.6" r="0.67" fill="#f6d88a" opacity="0.60"/>
<circle cx="78.5" cy="566.6" r="0.77" fill="#ffe8a8" opacity="0.60"/>
<circle cx="45.0" cy="555.8" r="0.81" fill="#ffe8a8" opacity="1.00"/>
<circle cx="36.8" cy="560.0" r="0.81" fill="#f6d88a" opacity="0.60"/>
<circle cx="122.0" cy="584.9" r="0.81" fill="#f0c060" opacity="1.00"/>
<circle cx="21.7" cy="563.0" r="0.59" fill="#f6d88a" opacity="1.00"/>
<circle cx="43.8" cy="557.0" r="0.57" fill="#ffe8a8" opacity="0.60"/>
<circle cx="89.3" cy="565.1" r="0.68" fill="#ffe8a8" opacity="0.80"/>
<circle cx="34.0" cy="558.8" r="0.72" fill="#ffe8a8" opacity="0.60"/>
<circle cx="45.2" cy="559.9" r="0.66" fill="#f0c060" opacity="1.00"/>
<circle cx="125.2" cy="596.7" r="0.79" fill="#f0c060" opacity="0.60"/>
<circle cx="99.2" cy="575.8" r="0.68" fill="#f6d88a" opacity="0.60"/>
<circle cx="35.5" cy="565.4" r="0.63" fill="#e89a40" opacity="0.80"/>
<circle cx="59.9" cy="553.2" r="0.48" fill="#f6d88a" opacity="1.00"/>
<circle cx="130.3" cy="596.1" r="0.55" fill="#e89a40" opacity="0.60"/>
<circle cx="79.9" cy="554.5" r="0.56" fill="#ffe8a8" opacity="0.60"/>
<circle cx="124.0" cy="588.6" r="0.89" fill="#f0c060" opacity="0.60"/>
<circle cx="23.2" cy="567.5" r="0.71" fill="#f6d88a" opacity="1.00"/>
<circle cx="48.0" cy="556.1" r="0.72" fill="#f0c060" opacity="0.80"/>
<circle cx="117.7" cy="578.8" r="0.87" fill="#f0c060" opacity="0.80"/>
<circle cx="54.9" cy="559.7" r="0.56" fill="#f0c060" opacity="0.80"/>
<circle cx="29.7" cy="567.1" r="0.55" fill="#ffe8a8" opacity="0.80"/>
<circle cx="65.6" cy="547.6" r="0.53" fill="#ffe8a8" opacity="0.60"/>
<circle cx="74.8" cy="558.0" r="0.64" fill="#f6d88a" opacity="1.00"/>
<circle cx="41.6" cy="566.3" r="0.68" fill="#e89a40" opacity="1.00"/>
<circle cx="55.4" cy="554.3" r="0.87" fill="#f0c060" opacity="0.80"/>
<circle cx="14.4" cy="569.3" r="0.80" fill="#f0c060" opacity="0.60"/>
<circle cx="96.1" cy="574.9" r="0.86" fill="#f6d88a" opacity="0.80"/>
<circle cx="115.1" cy="577.1" r="0.62" fill="#e89a40" opacity="1.00"/>
<circle cx="89.1" cy="570.9" r="0.59" fill="#f0c060" opacity="0.80"/>
<circle cx="5.6" cy="565.5" r="0.46" fill="#e89a40" opacity="0.80"/>
<circle cx="61.4" cy="558.1" r="0.69" fill="#f0c060" opacity="1.00"/>
<circle cx="95.1" cy="571.6" r="0.75" fill="#f0c060" opacity="0.60"/>
<circle cx="107.7" cy="586.7" r="0.69" fill="#ffe8a8" opacity="0.80"/>
<circle cx="20.5" cy="561.4" r="0.50" fill="#e89a40" opacity="0.80"/>
<circle cx="83.3" cy="564.2" r="0.51" fill="#f6d88a" opacity="1.00"/>
<circle cx="88.3" cy="561.2" r="0.89" fill="#e89a40" opacity="1.00"/>
<circle cx="91.7" cy="567.0" r="0.86" fill="#f0c060" opacity="1.00"/>
<circle cx="95.0" cy="566.9" r="0.84" fill="#f0c060" opacity="1.00"/>
<circle cx="34.6" cy="555.9" r="0.81" fill="#f6d88a" opacity="0.80"/>
<circle cx="74.7" cy="547.1" r="0.58" fill="#e89a40" opacity="0.60"/>
<circle cx="23.2" cy="565.6" r="0.63" fill="#ffe8a8" opacity="0.60"/>
<circle cx="49.6" cy="556.9" r="0.78" fill="#ffe8a8" opacity="0.60"/>
<circle cx="66.7" cy="548.1" r="0.57" fill="#e89a40" opacity="1.00"/>
<circle cx="119.8" cy="590.0" r="0.86" fill="#ffe8a8" opacity="0.80"/>
<circle cx="8.1" cy="562.1" r="0.67" fill="#e89a40" opacity="0.80"/>
<circle cx="96.0" cy="573.8" r="0.47" fill="#e89a40" opacity="0.80"/>
<circle cx="78.4" cy="559.4" r="0.57" fill="#f0c060" opacity="1.00"/>
<circle cx="64.7" cy="546.2" r="0.61" fill="#f0c060" opacity="0.60"/>
<circle cx="88.6" cy="561.5" r="0.73" fill="#ffe8a8" opacity="1.00"/>
<circle cx="58.7" cy="553.8" r="0.85" fill="#ffe8a8" opacity="0.80"/>
<circle cx="4.7" cy="569.2" r="0.51" fill="#e89a40" opacity="0.80"/>
<circle cx="70.3" cy="552.9" r="0.72" fill="#e89a40" opacity="0.60"/>
<circle cx="37.3" cy="563.1" r="0.55" fill="#f6d88a" opacity="1.00"/>
<circle cx="126.0" cy="597.9" r="0.83" fill="#f6d88a" opacity="1.00"/>
<circle cx="109.5" cy="581.2" r="0.85" fill="#e89a40" opacity="0.80"/>
<circle cx="50.3" cy="560.2" r="0.77" fill="#ffe8a8" opacity="1.00"/>
<circle cx="23.2" cy="563.1" r="0.54" fill="#f0c060" opacity="0.60"/>
<circle cx="46.6" cy="556.6" r="0.58" fill="#ffe8a8" opacity="0.80"/>
<circle cx="50.4" cy="551.3" r="0.75" fill="#ffe8a8" opacity="0.60"/>
<circle cx="89.1" cy="564.3" r="0.86" fill="#f0c060" opacity="0.60"/>
<circle cx="127.3" cy="598.5" r="0.82" fill="#e89a40" opacity="0.60"/>
<circle cx="115.6" cy="579.0" r="0.47" fill="#ffe8a8" opacity="0.80"/>
<circle cx="7.9" cy="562.6" r="0.56" fill="#ffe8a8" opacity="0.80"/>
<circle cx="96.2" cy="572.6" r="0.60" fill="#e89a40" opacity="0.60"/>
<circle cx="108.7" cy="587.3" r="0.82" fill="#ffe8a8" opacity="1.00"/>
<circle cx="97.4" cy="567.9" r="0.81" fill="#f0c060" opacity="0.60"/>
<circle cx="52.2" cy="552.1" r="0.75" fill="#f0c060" opacity="1.00"/>
<circle cx="26.4" cy="570.2" r="0.87" fill="#f0c060" opacity="0.80"/>
<circle cx="92.3" cy="570.9" r="0.64" fill="#ffe8a8" opacity="0.80"/>
<circle cx="122.3" cy="591.3" r="0.77" fill="#f6d88a" opacity="0.60"/>
<circle cx="28.4" cy="565.7" r="0.61" fill="#f6d88a" opacity="0.80"/>
<circle cx="48.8" cy="563.0" r="0.67" fill="#e89a40" opacity="0.60"/>
<circle cx="44.6" cy="560.8" r="0.81" fill="#e89a40" opacity="0.60"/>
<circle cx="54.4" cy="551.7" r="0.89" fill="#ffe8a8" opacity="1.00"/>
<circle cx="95.4" cy="567.6" r="0.70" fill="#f0c060" opacity="0.80"/>
<circle cx="24.8" cy="571.7" r="0.56" fill="#ffe8a8" opacity="0.80"/>
<circle cx="17.0" cy="569.4" r="0.60" fill="#f6d88a" opacity="0.80"/>
<circle cx="76.0" cy="562.5" r="0.57" fill="#f0c060" opacity="0.60"/>
<circle cx="65.9" cy="555.3" r="0.61" fill="#e89a40" opacity="1.00"/>
<circle cx="3.3" cy="440.6" r="0.59" fill="#f0c060" opacity="0.60"/>
<circle cx="10.9" cy="438.3" r="0.67" fill="#f0c060" opacity="0.80"/>
<circle cx="27.9" cy="432.3" r="0.63" fill="#f0c060" opacity="0.60"/>
<circle cx="32.6" cy="435.0" r="0.75" fill="#e89a40" opacity="0.80"/>
<circle cx="11.1" cy="436.7" r="0.81" fill="#f0c060" opacity="0.60"/>
<circle cx="50.2" cy="430.4" r="0.88" fill="#f0c060" opacity="1.00"/>
<circle cx="4.3" cy="436.0" r="0.59" fill="#e89a40" opacity="0.60"/>
<circle cx="52.1" cy="430.7" r="0.48" fill="#e89a40" opacity="0.60"/>
<circle cx="44.7" cy="430.7" r="0.87" fill="#e89a40" opacity="0.80"/>
<circle cx="18.3" cy="437.5" r="0.69" fill="#f0c060" opacity="0.80"/>
<circle cx="23.6" cy="435.3" r="0.86" fill="#f0c060" opacity="0.60"/>
<circle cx="33.5" cy="432.3" r="0.55" fill="#e89a40" opacity="1.00"/>
<circle cx="21.6" cy="434.5" r="0.61" fill="#e89a40" opacity="0.80"/>
<circle cx="18.2" cy="434.1" r="0.48" fill="#e89a40" opacity="1.00"/>
<circle cx="5.4" cy="436.2" r="0.55" fill="#f0c060" opacity="1.00"/>
<circle cx="18.1" cy="438.5" r="0.54" fill="#e89a40" opacity="0.60"/>
<circle cx="9.1" cy="436.5" r="0.46" fill="#e89a40" opacity="1.00"/>
<circle cx="3.1" cy="438.4" r="0.49" fill="#f0c060" opacity="0.60"/>
<circle cx="50.9" cy="427.9" r="0.50" fill="#e89a40" opacity="0.80"/>
<circle cx="28.3" cy="436.9" r="0.87" fill="#e89a40" opacity="0.80"/>
<circle cx="46.1" cy="432.6" r="0.48" fill="#e89a40" opacity="0.80"/>
<circle cx="50.8" cy="427.2" r="0.80" fill="#f0c060" opacity="0.60"/>
<circle cx="42.2" cy="429.6" r="0.47" fill="#e89a40" opacity="0.80"/>
<circle cx="49.0" cy="426.6" r="0.73" fill="#f0c060" opacity="0.60"/>
<circle cx="48.6" cy="429.1" r="0.75" fill="#e89a40" opacity="0.80"/>
<circle cx="29.1" cy="432.8" r="0.62" fill="#f0c060" opacity="1.00"/>
<circle cx="53.0" cy="426.7" r="0.58" fill="#f0c060" opacity="1.00"/>
<circle cx="3.2" cy="437.4" r="0.60" fill="#e89a40" opacity="0.80"/>
<circle cx="57.6" cy="427.0" r="0.78" fill="#e89a40" opacity="0.60"/>
<circle cx="50.1" cy="427.9" r="0.51" fill="#e89a40" opacity="0.60"/>
<circle cx="13.9" cy="437.9" r="0.87" fill="#f0c060" opacity="0.60"/>
<circle cx="29.6" cy="432.4" r="0.90" fill="#f0c060" opacity="0.60"/>
<circle cx="50.5" cy="428.9" r="0.81" fill="#e89a40" opacity="0.60"/>
<circle cx="31.2" cy="432.8" r="0.84" fill="#f0c060" opacity="0.80"/>
<circle cx="16.5" cy="436.1" r="0.70" fill="#e89a40" opacity="0.60"/>
<circle cx="4.2" cy="437.2" r="0.67" fill="#f0c060" opacity="1.00"/>
<circle cx="57.3" cy="430.6" r="0.82" fill="#f0c060" opacity="0.60"/>
<circle cx="19.8" cy="437.6" r="0.87" fill="#f0c060" opacity="0.80"/>
<circle cx="7.0" cy="438.0" r="0.83" fill="#e89a40" opacity="0.80"/>
<circle cx="4.4" cy="439.0" r="0.89" fill="#f0c060" opacity="1.00"/>
<circle cx="37.2" cy="434.3" r="0.54" fill="#e89a40" opacity="0.80"/>
<circle cx="0.8" cy="436.2" r="0.60" fill="#e89a40" opacity="1.00"/>
<circle cx="54.8" cy="427.3" r="0.54" fill="#f0c060" opacity="0.60"/>
<circle cx="40.3" cy="431.0" r="0.66" fill="#f0c060" opacity="0.80"/>
<circle cx="7.0" cy="439.3" r="0.61" fill="#f0c060" opacity="0.60"/>
<circle cx="57.5" cy="426.4" r="0.76" fill="#e89a40" opacity="0.80"/>
<circle cx="44.9" cy="430.9" r="0.57" fill="#e89a40" opacity="1.00"/>
<circle cx="24.2" cy="436.1" r="0.66" fill="#f0c060" opacity="0.60"/>
<circle cx="20.4" cy="435.8" r="0.71" fill="#e89a40" opacity="0.60"/>
<circle cx="50.5" cy="428.1" r="0.58" fill="#f0c060" opacity="1.00"/>
<circle cx="38.0" cy="432.6" r="0.54" fill="#e89a40" opacity="1.00"/>
<circle cx="13.1" cy="438.5" r="0.74" fill="#e89a40" opacity="0.80"/>
<circle cx="19.5" cy="434.3" r="0.57" fill="#f0c060" opacity="1.00"/>
<circle cx="35.5" cy="431.8" r="0.46" fill="#e89a40" opacity="0.60"/>
<circle cx="34.9" cy="434.1" r="0.58" fill="#f0c060" opacity="1.00"/>
<circle cx="6.1" cy="436.3" r="0.75" fill="#e89a40" opacity="0.60"/>
<circle cx="5.1" cy="436.6" r="0.78" fill="#e89a40" opacity="0.60"/>
<circle cx="39.3" cy="433.2" r="0.52" fill="#f0c060" opacity="0.80"/>
<circle cx="9.9" cy="435.4" r="0.74" fill="#f0c060" opacity="0.60"/>
<circle cx="56.6" cy="427.3" r="0.90" fill="#e89a40" opacity="0.80"/>
<circle cx="86.5" cy="444.8" r="0.90" fill="#f6d070" opacity="0.80"/>
<circle cx="80.9" cy="443.3" r="0.81" fill="#f6d070" opacity="1.00"/>
<circle cx="91.6" cy="448.7" r="0.51" fill="#f0a050" opacity="0.60"/>
<circle cx="83.2" cy="450.1" r="0.49" fill="#f6d070" opacity="1.00"/>
<circle cx="81.7" cy="448.6" r="0.75" fill="#ffdf90" opacity="0.80"/>
<circle cx="85.1" cy="441.0" r="0.50" fill="#f0a050" opacity="0.60"/>
<circle cx="58.4" cy="444.3" r="0.85" fill="#f6d070" opacity="0.60"/>
<circle cx="71.6" cy="439.6" r="0.69" fill="#ffdf90" opacity="0.60"/>
<circle cx="83.8" cy="456.5" r="0.70" fill="#f6d070" opacity="1.00"/>
<circle cx="64.3" cy="449.1" r="0.75" fill="#ffdf90" opacity="1.00"/>
<circle cx="69.8" cy="443.4" r="0.72" fill="#f0a050" opacity="0.60"/>
<circle cx="91.5" cy="449.8" r="0.71" fill="#f6d070" opacity="1.00"/>
<circle cx="61.3" cy="445.3" r="0.81" fill="#ffdf90" opacity="0.60"/>
<circle cx="62.1" cy="446.5" r="0.70" fill="#f6d070" opacity="0.80"/>
<circle cx="78.4" cy="451.4" r="0.50" fill="#f6d070" opacity="0.60"/>
<circle cx="65.1" cy="441.3" r="0.82" fill="#ffdf90" opacity="1.00"/>
<circle cx="82.3" cy="449.2" r="0.46" fill="#f6d070" opacity="0.80"/>
<circle cx="67.6" cy="447.2" r="0.88" fill="#ffdf90" opacity="0.60"/>
<circle cx="71.9" cy="444.7" r="0.69" fill="#ffdf90" opacity="0.80"/>
<circle cx="68.9" cy="446.7" r="0.67" fill="#ffdf90" opacity="1.00"/>
<circle cx="90.5" cy="444.6" r="0.86" fill="#f0a050" opacity="1.00"/>
<circle cx="69.6" cy="443.2" r="0.78" fill="#f0a050" opacity="0.60"/>
<circle cx="71.7" cy="442.2" r="0.61" fill="#f0a050" opacity="0.80"/>
<circle cx="73.5" cy="447.2" r="0.47" fill="#ffdf90" opacity="0.60"/>
<circle cx="65.8" cy="440.7" r="0.82" fill="#ffdf90" opacity="0.60"/>
<circle cx="82.3" cy="449.0" r="0.46" fill="#f0a050" opacity="0.80"/>
<circle cx="90.7" cy="444.2" r="0.78" fill="#f0a050" opacity="0.80"/>
<circle cx="78.6" cy="446.2" r="0.50" fill="#ffdf90" opacity="1.00"/>
<circle cx="70.7" cy="445.3" r="0.76" fill="#f0a050" opacity="0.60"/>
<circle cx="77.5" cy="454.4" r="0.72" fill="#f0a050" opacity="0.60"/>
<circle cx="76.3" cy="441.2" r="0.47" fill="#f6d070" opacity="0.60"/>
<circle cx="67.8" cy="443.3" r="0.57" fill="#f0a050" opacity="1.00"/>
<circle cx="87.5" cy="445.6" r="0.76" fill="#f6d070" opacity="0.80"/>
<circle cx="91.4" cy="449.4" r="0.82" fill="#f0a050" opacity="0.60"/>
<circle cx="68.5" cy="446.7" r="0.74" fill="#f6d070" opacity="0.80"/>
<circle cx="63.6" cy="436.4" r="0.73" fill="#ffdf90" opacity="0.60"/>
<circle cx="89.6" cy="447.4" r="0.87" fill="#f6d070" opacity="1.00"/>
<circle cx="77.1" cy="445.9" r="0.82" fill="#f0a050" opacity="0.80"/>
<circle cx="70.9" cy="440.4" r="0.82" fill="#f6d070" opacity="0.60"/>
<circle cx="74.4" cy="441.1" r="0.79" fill="#f0a050" opacity="0.80"/>
<circle cx="81.2" cy="448.1" r="0.85" fill="#ffdf90" opacity="0.60"/>
<circle cx="86.8" cy="444.5" r="0.88" fill="#f0a050" opacity="1.00"/>
<circle cx="86.5" cy="446.4" r="0.63" fill="#ffdf90" opacity="1.00"/>
<circle cx="78.3" cy="442.0" r="0.87" fill="#f6d070" opacity="0.60"/>
<circle cx="73.7" cy="440.0" r="0.51" fill="#f0a050" opacity="0.80"/>
<circle cx="72.6" cy="444.2" r="0.85" fill="#f0a050" opacity="0.60"/>
<circle cx="80.9" cy="450.2" r="0.76" fill="#f0a050" opacity="1.00"/>
<circle cx="84.8" cy="445.9" r="0.50" fill="#ffdf90" opacity="0.60"/>
<circle cx="84.5" cy="447.1" r="0.82" fill="#ffdf90" opacity="0.80"/>
<circle cx="71.3" cy="445.7" r="0.81" fill="#ffdf90" opacity="0.80"/>
<circle cx="74.4" cy="443.0" r="0.80" fill="#f6d070" opacity="0.80"/>
<circle cx="82.3" cy="445.4" r="0.63" fill="#f6d070" opacity="1.00"/>
<circle cx="75.4" cy="444.2" r="0.63" fill="#f6d070" opacity="0.80"/>
<circle cx="89.6" cy="445.7" r="0.81" fill="#f0a050" opacity="0.80"/>
<circle cx="66.6" cy="445.0" r="0.48" fill="#f6d070" opacity="0.80"/>
<circle cx="88.5" cy="454.1" r="0.66" fill="#f0a050" opacity="0.60"/>
<circle cx="66.9" cy="443.5" r="0.59" fill="#f6d070" opacity="0.60"/>
<circle cx="91.9" cy="446.6" r="0.61" fill="#f6d070" opacity="1.00"/>
<circle cx="75.7" cy="442.8" r="0.89" fill="#f0a050" opacity="0.80"/>
<circle cx="62.8" cy="441.7" r="0.80" fill="#f6d070" opacity="0.60"/>
<circle cx="87.4" cy="447.4" r="0.52" fill="#f6d070" opacity="1.00"/>
<circle cx="66.3" cy="440.1" r="0.90" fill="#f0a050" opacity="1.00"/>
<circle cx="67.9" cy="448.5" r="0.81" fill="#ffdf90" opacity="1.00"/>
<circle cx="91.1" cy="451.3" r="0.50" fill="#f0a050" opacity="0.60"/>
<circle cx="63.6" cy="445.6" r="0.58" fill="#ffdf90" opacity="0.60"/>
<circle cx="69.1" cy="441.4" r="0.48" fill="#f6d070" opacity="0.80"/>
<circle cx="85.0" cy="449.0" r="0.63" fill="#ffdf90" opacity="0.60"/>
<circle cx="79.1" cy="446.2" r="0.69" fill="#ffdf90" opacity="0.60"/>
<circle cx="77.3" cy="442.8" r="0.80" fill="#f0a050" opacity="0.80"/>
<circle cx="64.2" cy="435.7" r="0.87" fill="#f0a050" opacity="1.00"/>
<circle cx="84.9" cy="447.8" r="0.62" fill="#ffdf90" opacity="0.60"/>
<circle cx="89.9" cy="451.1" r="0.68" fill="#ffdf90" opacity="1.00"/>
<circle cx="70.3" cy="445.9" r="0.50" fill="#ffdf90" opacity="1.00"/>
<circle cx="58.9" cy="447.6" r="0.86" fill="#f6d070" opacity="1.00"/>
<circle cx="90.6" cy="448.9" r="0.61" fill="#f6d070" opacity="0.60"/>
<circle cx="90.1" cy="450.6" r="0.75" fill="#f6d070" opacity="0.60"/>
<circle cx="71.8" cy="449.5" r="0.89" fill="#ffdf90" opacity="1.00"/>
<circle cx="60.0" cy="445.7" r="0.69" fill="#f6d070" opacity="0.60"/>
<circle cx="76.7" cy="444.2" r="0.54" fill="#ffdf90" opacity="0.60"/>
<circle cx="72.2" cy="448.3" r="0.67" fill="#f6d070" opacity="1.00"/>
<circle cx="76.5" cy="438.6" r="0.70" fill="#f6d070" opacity="0.80"/>
<circle cx="68.9" cy="441.3" r="0.55" fill="#f0a050" opacity="0.60"/>
<circle cx="90.7" cy="454.4" r="0.84" fill="#f6d070" opacity="1.00"/>
<circle cx="75.5" cy="443.9" r="0.72" fill="#ffdf90" opacity="1.00"/>
<circle cx="80.2" cy="441.6" r="0.49" fill="#ffdf90" opacity="0.60"/>
<circle cx="91.0" cy="443.3" r="0.46" fill="#f6d070" opacity="0.80"/>
<circle cx="87.6" cy="448.3" r="0.46" fill="#f6d070" opacity="1.00"/>
<circle cx="78.9" cy="446.6" r="0.83" fill="#ffdf90" opacity="0.60"/>
<circle cx="57.8" cy="444.4" r="0.89" fill="#f6d070" opacity="0.80"/>
<circle cx="70.1" cy="447.3" r="0.55" fill="#f0a050" opacity="0.60"/>
<circle cx="126.8" cy="455.6" r="0.62" fill="#f0c060" opacity="1.00"/>
<circle cx="117.5" cy="453.0" r="0.65" fill="#ffe090" opacity="0.80"/>
<circle cx="97.0" cy="446.2" r="0.67" fill="#f0c060" opacity="0.60"/>
<circle cx="99.4" cy="447.3" r="0.74" fill="#f0c060" opacity="1.00"/>
<circle cx="111.4" cy="450.4" r="0.53" fill="#ffe090" opacity="0.60"/>
<circle cx="101.3" cy="450.2" r="0.60" fill="#ffe090" opacity="1.00"/>
<circle cx="91.4" cy="443.5" r="0.76" fill="#ffe090" opacity="0.80"/>
<circle cx="98.7" cy="446.7" r="0.64" fill="#ffe090" opacity="0.80"/>
<circle cx="117.3" cy="453.0" r="0.83" fill="#ffe090" opacity="0.80"/>
<circle cx="122.3" cy="454.4" r="0.80" fill="#f0c060" opacity="0.60"/>
<circle cx="105.7" cy="448.0" r="0.78" fill="#f0c060" opacity="0.60"/>
<circle cx="91.5" cy="445.6" r="0.46" fill="#ffe090" opacity="0.80"/>
<circle cx="127.3" cy="456.4" r="0.85" fill="#ffe090" opacity="0.80"/>
<circle cx="103.7" cy="448.6" r="0.87" fill="#ffe090" opacity="1.00"/>
<circle cx="102.7" cy="448.6" r="0.77" fill="#ffe090" opacity="1.00"/>
<circle cx="126.2" cy="455.7" r="0.75" fill="#f0c060" opacity="0.80"/>
<circle cx="119.5" cy="454.0" r="0.84" fill="#ffe090" opacity="1.00"/>
<circle cx="104.3" cy="447.6" r="0.47" fill="#f0c060" opacity="0.80"/>
<circle cx="97.0" cy="446.9" r="0.69" fill="#f0c060" opacity="1.00"/>
<circle cx="100.3" cy="448.0" r="0.49" fill="#ffe090" opacity="0.60"/>
<circle cx="93.4" cy="443.2" r="0.87" fill="#ffe090" opacity="0.60"/>
<circle cx="128.8" cy="458.8" r="0.74" fill="#ffe090" opacity="0.80"/>
<circle cx="109.3" cy="451.4" r="0.61" fill="#f0c060" opacity="0.80"/>
<circle cx="92.0" cy="442.4" r="0.52" fill="#f0c060" opacity="1.00"/>
<circle cx="91.0" cy="443.5" r="0.47" fill="#ffe090" opacity="0.60"/>
<circle cx="97.6" cy="444.0" r="0.78" fill="#ffe090" opacity="0.60"/>
<circle cx="92.1" cy="440.1" r="0.73" fill="#ffe090" opacity="0.80"/>
<circle cx="90.4" cy="445.0" r="0.60" fill="#ffe090" opacity="0.80"/>
<circle cx="130.3" cy="455.2" r="0.70" fill="#f0c060" opacity="0.80"/>
<circle cx="114.8" cy="454.2" r="0.59" fill="#f0c060" opacity="0.60"/>
<circle cx="126.7" cy="454.1" r="0.69" fill="#f0c060" opacity="0.80"/>
<circle cx="103.8" cy="447.0" r="0.86" fill="#ffe090" opacity="1.00"/>
<circle cx="127.8" cy="457.9" r="0.52" fill="#f0c060" opacity="0.60"/>
<circle cx="129.1" cy="453.7" r="0.59" fill="#f0c060" opacity="0.60"/>
<circle cx="119.1" cy="451.8" r="0.74" fill="#ffe090" opacity="0.80"/>
<circle cx="109.0" cy="451.6" r="0.50" fill="#f0c060" opacity="1.00"/>
<circle cx="90.5" cy="441.9" r="0.71" fill="#f0c060" opacity="0.60"/>
<circle cx="93.7" cy="444.3" r="0.67" fill="#f0c060" opacity="0.60"/>
<circle cx="115.9" cy="453.2" r="0.65" fill="#ffe090" opacity="0.80"/>
<circle cx="122.8" cy="454.0" r="0.56" fill="#f0c060" opacity="0.60"/>
<g opacity=".4" stroke-width="1">
<path d="M89 423 l60 -20" stroke="#a060ff"/>
<path d="M-4 442 l34 -12" stroke="#7a1ac0"/>
<path d="M25 404 l70 -24" stroke="#1a0a50"/>
<path d="M12 440 l43 -15" stroke="#7a1ac0"/>
<path d="M98 528 l85 -29" stroke="#123a9a"/>
<path d="M68 527 l79 -27" stroke="#123a9a"/>
<path d="M42 397 l73 -25" stroke="#8a4cf0"/>
<path d="M-7 550 l61 -21" stroke="#7ab8ff"/>
<path d="M61 464 l71 -24" stroke="#0f2a80"/>
<path d="M61 552 l34 -12" stroke="#123a9a"/>
<path d="M98 396 l82 -28" stroke="#3a1a90"/>
<path d="M57 423 l76 -26" stroke="#3a1a90"/>
<path d="M59 562 l38 -13" stroke="#5aa8ff"/>
<path d="M35 458 l54 -18" stroke="#c050ff"/>
<path d="M94 483 l68 -23" stroke="#0f2a80"/>
<path d="M68 418 l32 -11" stroke="#2a1070"/>
<path d="M98 470 l44 -15" stroke="#3a90ff"/>
<path d="M66 522 l61 -21" stroke="#7ab8ff"/>
<path d="M66 464 l32 -11" stroke="#7ab8ff"/>
<path d="M94 505 l50 -17" stroke="#5aa8ff"/>
<path d="M22 548 l87 -30" stroke="#3a90ff"/>
<path d="M41 433 l33 -11" stroke="#8a4cf0"/>
<path d="M47 428 l59 -20" stroke="#8a4cf0"/>
<path d="M68 393 l33 -11" stroke="#1a0a50"/>
<path d="M12 422 l65 -22" stroke="#2a1070"/>
<path d="M34 457 l50 -17" stroke="#7a1ac0"/>
<path d="M85 431 l81 -28" stroke="#1a0a50"/>
<path d="M35 454 l44 -15" stroke="#7a1ac0"/>
<path d="M-1 549 l56 -19" stroke="#0f2a80"/>
<path d="M74 505 l63 -22" stroke="#3a90ff"/>
<path d="M18 546 l62 -21" stroke="#5aa8ff"/>
<path d="M11 475 l76 -26" stroke="#c050ff"/>
<path d="M10 492 l88 -30" stroke="#d070ff"/>
<path d="M93 486 l46 -16" stroke="#5aa8ff"/>
<path d="M40 509 l56 -19" stroke="#5aa8ff"/>
<path d="M11 556 l45 -15" stroke="#5aa8ff"/>
<path d="M-10 480 l58 -20" stroke="#d070ff"/>
<path d="M4 458 l56 -19" stroke="#d070ff"/>
<path d="M17 524 l79 -27" stroke="#123a9a"/>
<path d="M58 504 l33 -11" stroke="#3a90ff"/>
<path d="M-4 399 l58 -20" stroke="#8a4cf0"/>
<path d="M72 448 l74 -25" stroke="#3a90ff"/>
<path d="M95 395 l81 -28" stroke="#a060ff"/>
<path d="M86 562 l86 -29" stroke="#5aa8ff"/>
<path d="M-8 439 l80 -27" stroke="#1a0a50"/>
<path d="M71 485 l82 -28" stroke="#123a9a"/>
<path d="M77 424 l72 -25" stroke="#a060ff"/>
<path d="M63 414 l42 -14" stroke="#a060ff"/>
<path d="M59 435 l55 -19" stroke="#3a1a90"/>
<path d="M-0 493 l74 -25" stroke="#d070ff"/>
<path d="M40 542 l53 -18" stroke="#3a90ff"/>
<path d="M76 561 l54 -18" stroke="#5aa8ff"/>
<path d="M23 516 l73 -25" stroke="#3a90ff"/>
<path d="M64 500 l56 -19" stroke="#7ab8ff"/>
<path d="M75 418 l62 -21" stroke="#3a1a90"/>
<path d="M33 482 l80 -27" stroke="#7a1ac0"/>
<path d="M19 521 l67 -23" stroke="#123a9a"/>
<path d="M23 539 l87 -30" stroke="#0f2a80"/>
<path d="M54 386 l79 -27" stroke="#a060ff"/>
<path d="M98 388 l73 -25" stroke="#3a1a90"/>
</g>
<g opacity=".3" stroke-width="1">
<path d="M59 703 l48 -18" stroke="#05050c"/>
<path d="M9 661 l32 -12" stroke="#05050c"/>
<path d="M77 651 l97 -37" stroke="#4a1a90"/>
<path d="M31 705 l97 -37" stroke="#4a1a90"/>
<path d="M65 631 l93 -35" stroke="#05050c"/>
<path d="M87 646 l59 -23" stroke="#1a2a70"/>
<path d="M-4 622 l62 -24" stroke="#05050c"/>
<path d="M58 734 l97 -37" stroke="#4a1a90"/>
<path d="M-4 664 l31 -12" stroke="#05050c"/>
<path d="M73 696 l88 -33" stroke="#05050c"/>
<path d="M8 698 l70 -27" stroke="#05050c"/>
<path d="M35 613 l76 -29" stroke="#1a2a70"/>
<path d="M65 709 l88 -34" stroke="#05050c"/>
<path d="M11 641 l38 -15" stroke="#3a2a90"/>
<path d="M-7 690 l43 -16" stroke="#3a2a90"/>
<path d="M73 671 l32 -12" stroke="#4a1a90"/>
<path d="M15 717 l79 -30" stroke="#4a1a90"/>
<path d="M95 652 l45 -17" stroke="#05050c"/>
<path d="M-7 698 l94 -36" stroke="#05050c"/>
<path d="M51 645 l55 -21" stroke="#05050c"/>
<path d="M64 638 l41 -15" stroke="#4a1a90"/>
<path d="M96 708 l42 -16" stroke="#1a2a70"/>
<path d="M71 724 l42 -16" stroke="#4a1a90"/>
<path d="M32 686 l84 -32" stroke="#4a1a90"/>
<path d="M17 719 l55 -21" stroke="#1a2a70"/>
<path d="M70 672 l90 -34" stroke="#3a2a90"/>
<path d="M72 706 l96 -36" stroke="#3a2a90"/>
<path d="M-5 622 l55 -21" stroke="#05050c"/>
<path d="M93 685 l34 -13" stroke="#3a2a90"/>
<path d="M99 662 l73 -28" stroke="#05050c"/>
<path d="M70 644 l79 -30" stroke="#4a1a90"/>
<path d="M84 617 l45 -17" stroke="#3a2a90"/>
<path d="M33 654 l47 -18" stroke="#4a1a90"/>
<path d="M-8 647 l55 -21" stroke="#05050c"/>
</g>
<path d="M0 133 L14 127" stroke="#8a3ad0" stroke-width="1.600" opacity=".9"/>
<path d="M116 8 L129 3" stroke="#9a40e0" stroke-width="1.300" opacity=".8"/>
<path d="M8 24 l7 -2" stroke="#8a8aa0" stroke-width="1" opacity=".22"/>
<path d="M100 47 l8 -3" stroke="#8a8aa0" stroke-width="1" opacity=".22"/>
<path d="M122 82 l6 -2" stroke="#8a8aa0" stroke-width="1" opacity=".22"/>
<path d="M84 138 l6 -2" stroke="#8a8aa0" stroke-width="1" opacity=".22"/>
<path d="M10 198 l7 -2" stroke="#8a8aa0" stroke-width="1" opacity=".22"/>
<path d="M40 44 l6 -2" stroke="#8a8aa0" stroke-width="1" opacity=".22"/>
<path d="M108 160 l6 -2" stroke="#8a8aa0" stroke-width="1" opacity=".22"/>
<path d="M92 182 l6 -2" stroke="#8a8aa0" stroke-width="1" opacity=".22"/>
<path d="M8 218 l8 -3" stroke="#8a8aa0" stroke-width="1" opacity=".22"/>
<path d="M60 90 l5 -2" stroke="#8a8aa0" stroke-width="1" opacity=".22"/>
<circle cx="77.0" cy="98.1" r="0.4" fill="#cfcfe8" opacity="0.30"/>
<circle cx="110.0" cy="171.2" r="0.8" fill="#cfcfe8" opacity="0.30"/>
<circle cx="40.5" cy="323.8" r="0.8" fill="#cfcfe8" opacity="0.50"/>
<circle cx="90.0" cy="182.7" r="0.6" fill="#cfcfe8" opacity="0.50"/>
<circle cx="47.1" cy="96.9" r="0.6" fill="#cfcfe8" opacity="0.70"/>
<circle cx="104.4" cy="308.4" r="0.5" fill="#cfcfe8" opacity="0.20"/>
<circle cx="38.5" cy="142.9" r="0.4" fill="#cfcfe8" opacity="0.70"/>
<circle cx="59.3" cy="190.5" r="0.5" fill="#cfcfe8" opacity="0.70"/>
<circle cx="88.9" cy="252.5" r="0.6" fill="#cfcfe8" opacity="0.20"/>
<circle cx="51.7" cy="201.8" r="0.8" fill="#cfcfe8" opacity="0.30"/>
<circle cx="9.7" cy="90.1" r="0.5" fill="#cfcfe8" opacity="0.70"/>
<circle cx="55.5" cy="203.0" r="0.4" fill="#cfcfe8" opacity="0.40"/>
<circle cx="1.7" cy="54.1" r="0.6" fill="#cfcfe8" opacity="0.20"/>
<circle cx="116.5" cy="215.9" r="0.8" fill="#cfcfe8" opacity="0.70"/>
<circle cx="7.3" cy="259.0" r="0.4" fill="#cfcfe8" opacity="0.50"/>
<circle cx="96.8" cy="88.4" r="0.6" fill="#cfcfe8" opacity="0.30"/>
<circle cx="121.7" cy="238.1" r="0.5" fill="#cfcfe8" opacity="0.70"/>
<circle cx="119.8" cy="224.3" r="0.4" fill="#cfcfe8" opacity="0.30"/>
<circle cx="78.5" cy="88.6" r="0.5" fill="#cfcfe8" opacity="0.40"/>
<circle cx="23.0" cy="325.3" r="0.8" fill="#cfcfe8" opacity="0.20"/>
<circle cx="126.9" cy="67.2" r="0.5" fill="#cfcfe8" opacity="0.30"/>
<circle cx="98.6" cy="20.9" r="0.4" fill="#cfcfe8" opacity="0.30"/>
<circle cx="102.8" cy="231.5" r="0.5" fill="#cfcfe8" opacity="0.50"/>
<circle cx="96.5" cy="116.6" r="0.4" fill="#cfcfe8" opacity="0.70"/>
<circle cx="0.9" cy="249.7" r="0.8" fill="#cfcfe8" opacity="0.40"/>
<circle cx="49.8" cy="300.6" r="0.5" fill="#cfcfe8" opacity="0.50"/>
<circle cx="92.9" cy="67.6" r="0.6" fill="#cfcfe8" opacity="0.20"/>
<circle cx="31.2" cy="101.8" r="0.5" fill="#cfcfe8" opacity="0.20"/>
<circle cx="8.6" cy="68.1" r="0.5" fill="#cfcfe8" opacity="0.50"/>
<circle cx="37.7" cy="308.3" r="0.4" fill="#cfcfe8" opacity="0.50"/>
<circle cx="121.6" cy="116.8" r="0.4" fill="#cfcfe8" opacity="0.20"/>
<circle cx="53.3" cy="214.7" r="0.4" fill="#cfcfe8" opacity="0.70"/>
<circle cx="32.9" cy="42.7" r="0.5" fill="#cfcfe8" opacity="0.70"/>
<circle cx="48.3" cy="120.5" r="0.5" fill="#cfcfe8" opacity="0.70"/>
<circle cx="83.6" cy="221.9" r="0.5" fill="#cfcfe8" opacity="0.70"/>
<circle cx="1.5" cy="240.2" r="0.8" fill="#cfcfe8" opacity="0.30"/>
<circle cx="58.3" cy="176.8" r="0.4" fill="#cfcfe8" opacity="0.20"/>
<circle cx="16.9" cy="140.0" r="0.5" fill="#cfcfe8" opacity="0.50"/>
<circle cx="80.6" cy="272.2" r="0.5" fill="#cfcfe8" opacity="0.20"/>
<circle cx="45.6" cy="24.5" r="0.5" fill="#cfcfe8" opacity="0.30"/>
<circle cx="31.4" cy="236.2" r="0.5" fill="#cfcfe8" opacity="0.20"/>
<circle cx="92.7" cy="50.6" r="0.5" fill="#cfcfe8" opacity="0.70"/>
<circle cx="128.5" cy="293.2" r="0.8" fill="#cfcfe8" opacity="0.20"/>
<circle cx="29.9" cy="65.7" r="0.6" fill="#cfcfe8" opacity="0.20"/>
<circle cx="56.8" cy="26.9" r="0.8" fill="#cfcfe8" opacity="0.30"/>
<circle cx="9.2" cy="301.7" r="0.6" fill="#cfcfe8" opacity="0.50"/>
<circle cx="19.4" cy="207.4" r="0.8" fill="#cfcfe8" opacity="0.20"/>
<circle cx="50.4" cy="173.1" r="0.4" fill="#cfcfe8" opacity="0.70"/>
<circle cx="3.7" cy="294.4" r="0.4" fill="#cfcfe8" opacity="0.50"/>
<circle cx="115.4" cy="214.5" r="0.6" fill="#cfcfe8" opacity="0.40"/>
<circle cx="17.2" cy="140.0" r="0.5" fill="#cfcfe8" opacity="0.20"/>
<circle cx="118.1" cy="14.9" r="0.5" fill="#cfcfe8" opacity="0.40"/>
<circle cx="38.1" cy="273.8" r="0.4" fill="#cfcfe8" opacity="0.30"/>
<circle cx="81.7" cy="315.8" r="0.5" fill="#cfcfe8" opacity="0.40"/>
<circle cx="96.3" cy="316.1" r="0.5" fill="#cfcfe8" opacity="0.70"/>
<circle cx="116.7" cy="210.6" r="0.5" fill="#cfcfe8" opacity="0.30"/>
<circle cx="109.1" cy="239.4" r="0.8" fill="#cfcfe8" opacity="0.30"/>
<circle cx="33.8" cy="181.3" r="0.4" fill="#cfcfe8" opacity="0.30"/>
<circle cx="101.0" cy="239.3" r="0.6" fill="#cfcfe8" opacity="0.70"/>
<circle cx="36.4" cy="117.8" r="0.8" fill="#cfcfe8" opacity="0.50"/>
<circle cx="24.9" cy="163.3" r="0.4" fill="#cfcfe8" opacity="0.40"/>
<circle cx="24.3" cy="184.7" r="0.8" fill="#cfcfe8" opacity="0.30"/>
<circle cx="70.5" cy="95.9" r="0.6" fill="#cfcfe8" opacity="0.70"/>
<circle cx="79.0" cy="267.7" r="0.4" fill="#cfcfe8" opacity="0.20"/>
<circle cx="89.4" cy="228.9" r="0.5" fill="#cfcfe8" opacity="0.50"/>
<circle cx="128.9" cy="232.7" r="0.4" fill="#cfcfe8" opacity="0.50"/>
<circle cx="93.1" cy="84.8" r="0.6" fill="#cfcfe8" opacity="0.30"/>
<circle cx="93.9" cy="312.7" r="0.6" fill="#cfcfe8" opacity="0.40"/>
<circle cx="41.3" cy="145.1" r="0.5" fill="#cfcfe8" opacity="0.50"/>
<circle cx="70.0" cy="225.8" r="0.5" fill="#cfcfe8" opacity="0.30"/>
<circle cx="80.2" cy="59.2" r="0.4" fill="#cfcfe8" opacity="0.50"/>
<circle cx="53.8" cy="66.9" r="0.5" fill="#cfcfe8" opacity="0.70"/>
<circle cx="87.5" cy="130.9" r="0.4" fill="#cfcfe8" opacity="0.40"/>
<circle cx="12.8" cy="13.1" r="0.6" fill="#cfcfe8" opacity="0.40"/>
<circle cx="88.9" cy="200.0" r="0.5" fill="#cfcfe8" opacity="0.20"/>
<circle cx="7.5" cy="236.6" r="0.6" fill="#cfcfe8" opacity="0.30"/>
<circle cx="13.1" cy="214.0" r="0.4" fill="#cfcfe8" opacity="0.30"/>
<circle cx="69.1" cy="46.8" r="0.8" fill="#cfcfe8" opacity="0.40"/>
<circle cx="119.4" cy="136.1" r="0.5" fill="#cfcfe8" opacity="0.50"/>
<circle cx="72.0" cy="212.5" r="0.4" fill="#cfcfe8" opacity="0.70"/>
<circle cx="126.7" cy="104.8" r="0.5" fill="#cfcfe8" opacity="0.50"/>
<circle cx="60.9" cy="3.9" r="0.6" fill="#cfcfe8" opacity="0.40"/>
<circle cx="20.4" cy="97.2" r="0.8" fill="#cfcfe8" opacity="0.30"/>
<circle cx="46.7" cy="133.4" r="0.4" fill="#cfcfe8" opacity="0.40"/>
<circle cx="9.6" cy="222.1" r="0.6" fill="#cfcfe8" opacity="0.40"/>
<circle cx="62.9" cy="145.3" r="0.6" fill="#cfcfe8" opacity="0.40"/>
<circle cx="10.5" cy="43.0" r="0.6" fill="#cfcfe8" opacity="0.70"/>
<circle cx="10.3" cy="247.4" r="0.5" fill="#cfcfe8" opacity="0.50"/>
<circle cx="19.4" cy="154.5" r="0.8" fill="#cfcfe8" opacity="0.30"/>
<circle cx="99.3" cy="162.2" r="0.5" fill="#cfcfe8" opacity="0.40"/>
<circle cx="47.8" cy="324.2" r="0.5" fill="#cfcfe8" opacity="0.20"/>
<circle cx="0.4" cy="61.6" r="0.5" fill="#cfcfe8" opacity="0.30"/>
<circle cx="21.1" cy="41.4" r="0.4" fill="#cfcfe8" opacity="0.70"/>
<circle cx="87.8" cy="78.1" r="0.6" fill="#cfcfe8" opacity="0.30"/>
<circle cx="78.7" cy="18.6" r="0.4" fill="#cfcfe8" opacity="0.40"/>
<circle cx="91.7" cy="155.0" r="0.4" fill="#cfcfe8" opacity="0.20"/>
<circle cx="43.2" cy="146.6" r="0.5" fill="#cfcfe8" opacity="0.20"/>
<circle cx="118.5" cy="65.1" r="0.6" fill="#cfcfe8" opacity="0.40"/>
<circle cx="39.9" cy="152.5" r="0.4" fill="#cfcfe8" opacity="0.50"/>
<circle cx="80.3" cy="116.9" r="0.6" fill="#cfcfe8" opacity="0.20"/>
<circle cx="106.1" cy="87.1" r="0.8" fill="#cfcfe8" opacity="0.70"/>
<circle cx="123.5" cy="315.7" r="0.5" fill="#cfcfe8" opacity="0.30"/>
<circle cx="71.7" cy="115.9" r="0.5" fill="#cfcfe8" opacity="0.70"/>
<circle cx="96.7" cy="277.2" r="0.5" fill="#cfcfe8" opacity="0.50"/>
<circle cx="29.1" cy="22.9" r="0.8" fill="#cfcfe8" opacity="0.20"/>
<circle cx="30.0" cy="88.9" r="0.6" fill="#cfcfe8" opacity="0.50"/>
<circle cx="110.0" cy="177.3" r="0.5" fill="#cfcfe8" opacity="0.40"/>
<circle cx="10.0" cy="82.2" r="0.8" fill="#cfcfe8" opacity="0.70"/>
<circle cx="32.2" cy="32.8" r="0.8" fill="#cfcfe8" opacity="0.70"/>
<circle cx="107.9" cy="289.5" r="0.6" fill="#cfcfe8" opacity="0.50"/>
<circle cx="118.4" cy="285.4" r="0.4" fill="#cfcfe8" opacity="0.40"/>
<circle cx="45.8" cy="128.5" r="0.5" fill="#cfcfe8" opacity="0.30"/>
<circle cx="109.7" cy="140.9" r="0.4" fill="#cfcfe8" opacity="0.40"/>
<circle cx="50.0" cy="207.6" r="0.5" fill="#cfcfe8" opacity="0.40"/>
<circle cx="76.9" cy="232.2" r="0.5" fill="#cfcfe8" opacity="0.70"/>
<circle cx="116.0" cy="30.6" r="0.5" fill="#cfcfe8" opacity="0.50"/>
<circle cx="29.4" cy="320.4" r="0.5" fill="#cfcfe8" opacity="0.50"/>
<circle cx="122.5" cy="292.2" r="0.6" fill="#cfcfe8" opacity="0.40"/>
<circle cx="39.7" cy="175.1" r="0.5" fill="#cfcfe8" opacity="0.70"/>
<circle cx="104.3" cy="119.0" r="0.5" fill="#cfcfe8" opacity="0.20"/>
<circle cx="15.6" cy="28.3" r="0.8" fill="#cfcfe8" opacity="0.70"/>
<circle cx="2.0" cy="165.5" r="0.8" fill="#cfcfe8" opacity="0.50"/>
<circle cx="41.5" cy="12.7" r="0.6" fill="#cfcfe8" opacity="0.50"/>
<circle cx="46.8" cy="336.7" r="0.8" fill="#cfcfe8" opacity="0.20"/>
<circle cx="16.4" cy="294.9" r="0.4" fill="#cfcfe8" opacity="0.30"/>
<circle cx="72.4" cy="35.5" r="0.4" fill="#cfcfe8" opacity="0.30"/>
<circle cx="53.4" cy="57.1" r="0.5" fill="#cfcfe8" opacity="0.70"/>
<circle cx="38.5" cy="107.5" r="0.4" fill="#cfcfe8" opacity="0.50"/>
<circle cx="83.9" cy="172.6" r="0.5" fill="#cfcfe8" opacity="0.20"/>
<circle cx="20.5" cy="193.5" r="0.6" fill="#cfcfe8" opacity="0.70"/>
<circle cx="79.0" cy="299.8" r="0.6" fill="#cfcfe8" opacity="0.20"/>
<circle cx="106.4" cy="272.1" r="0.5" fill="#cfcfe8" opacity="0.40"/>
<circle cx="14.8" cy="51.1" r="0.5" fill="#cfcfe8" opacity="0.70"/>
<circle cx="74.6" cy="229.4" r="0.8" fill="#cfcfe8" opacity="0.40"/>
<circle cx="13.5" cy="122.0" r="0.6" fill="#cfcfe8" opacity="0.20"/>
<circle cx="64.0" cy="138.0" r="0.5" fill="#cfcfe8" opacity="0.20"/>
<circle cx="45.2" cy="236.5" r="0.8" fill="#cfcfe8" opacity="0.30"/>
<circle cx="53.7" cy="190.0" r="0.5" fill="#cfcfe8" opacity="0.50"/>
<circle cx="60.1" cy="93.9" r="0.6" fill="#cfcfe8" opacity="0.20"/>
<circle cx="71.2" cy="217.7" r="0.8" fill="#cfcfe8" opacity="0.70"/>
<circle cx="70.1" cy="178.7" r="0.5" fill="#cfcfe8" opacity="0.50"/>
<circle cx="81.5" cy="173.8" r="0.6" fill="#cfcfe8" opacity="0.30"/>
<circle cx="91.4" cy="318.5" r="0.6" fill="#cfcfe8" opacity="0.70"/>
<circle cx="27.1" cy="44.0" r="0.5" fill="#cfcfe8" opacity="0.50"/>
<circle cx="30.1" cy="328.5" r="0.4" fill="#cfcfe8" opacity="0.50"/>
<circle cx="11.8" cy="103.9" r="0.8" fill="#cfcfe8" opacity="0.40"/>
<circle cx="56.8" cy="166.8" r="0.6" fill="#cfcfe8" opacity="0.40"/>
<circle cx="103.2" cy="184.6" r="0.5" fill="#cfcfe8" opacity="0.70"/>
<circle cx="119.4" cy="367.9" r=".5" fill="#e0b050" opacity=".6"/>
<circle cx="113.4" cy="383.4" r=".5" fill="#e0b050" opacity=".6"/>
<circle cx="127.5" cy="382.9" r=".5" fill="#e0b050" opacity=".6"/>
<circle cx="126.3" cy="387.4" r=".5" fill="#e0b050" opacity=".6"/>
<circle cx="102.9" cy="375.3" r=".5" fill="#e0b050" opacity=".6"/>
<circle cx="97.9" cy="370.5" r=".5" fill="#e0b050" opacity=".6"/>
<circle cx="99.0" cy="391.8" r=".5" fill="#e0b050" opacity=".6"/>
<circle cx="97.1" cy="388.1" r=".5" fill="#e0b050" opacity=".6"/>
<circle cx="116.6" cy="374.8" r=".5" fill="#e0b050" opacity=".6"/>
<circle cx="101.5" cy="375.0" r=".5" fill="#e0b050" opacity=".6"/>
<circle cx="110.5" cy="391.1" r=".5" fill="#e0b050" opacity=".6"/>
<circle cx="101.5" cy="393.1" r=".5" fill="#e0b050" opacity=".6"/>
<circle cx="128.0" cy="369.6" r=".5" fill="#e0b050" opacity=".6"/>
<circle cx="108.2" cy="379.9" r=".5" fill="#e0b050" opacity=".6"/>
</g>
<rect x="1009" y="0" width="15" height="728" fill="url(#wr)"/>
<g opacity=".45" stroke-width="1">
<path d="M1006 23 l20 7" stroke="#d060ff"/>
<path d="M1006 113 l20 7" stroke="#d060ff"/>
<path d="M1006 118 l20 7" stroke="#d060ff"/>
<path d="M1006 230 l20 9" stroke="#c040f0"/>
<path d="M1006 240 l20 5" stroke="#5a10a0"/>
<path d="M1006 213 l20 7" stroke="#5a10a0"/>
<path d="M1006 232 l20 5" stroke="#d060ff"/>
<path d="M1006 115 l20 7" stroke="#d060ff"/>
<path d="M1006 210 l20 9" stroke="#c040f0"/>
<path d="M1006 51 l20 7" stroke="#d060ff"/>
<path d="M1006 13 l20 7" stroke="#c040f0"/>
<path d="M1006 202 l20 7" stroke="#d060ff"/>
<path d="M1006 149 l20 7" stroke="#d060ff"/>
<path d="M1006 103 l20 7" stroke="#c040f0"/>
<path d="M1006 109 l20 7" stroke="#d060ff"/>
<path d="M1006 194 l20 7" stroke="#3a0a80"/>
<path d="M1006 68 l20 7" stroke="#3a0a80"/>
<path d="M1006 231 l20 9" stroke="#c040f0"/>
<path d="M1006 92 l20 7" stroke="#d060ff"/>
<path d="M1006 84 l20 7" stroke="#3a0a80"/>
<path d="M1006 23 l20 9" stroke="#d060ff"/>
<path d="M1006 2 l20 7" stroke="#5a10a0"/>
<path d="M1006 29 l20 5" stroke="#3a0a80"/>
<path d="M1006 149 l20 9" stroke="#d060ff"/>
<path d="M1006 90 l20 7" stroke="#5a10a0"/>
<path d="M1006 6 l20 5" stroke="#3a0a80"/>
<path d="M1006 439 l20 -8" stroke="#2a3a90"/>
<path d="M1006 355 l20 -8" stroke="#3a2a90"/>
<path d="M1006 364 l20 -6" stroke="#3a2a90"/>
<path d="M1006 347 l20 -6" stroke="#3a2a90"/>
<path d="M1006 392 l20 -6" stroke="#3a2a90"/>
<path d="M1006 380 l20 -8" stroke="#2a3a90"/>
<path d="M1006 470 l20 -6" stroke="#3a2a90"/>
<path d="M1006 341 l20 -8" stroke="#2a3a90"/>
<path d="M1006 430 l20 -8" stroke="#0a0a28"/>
<path d="M1006 291 l20 -6" stroke="#3a2a90"/>
<path d="M1006 362 l20 -8" stroke="#2a3a90"/>
<path d="M1006 368 l20 -8" stroke="#3a2a90"/>
<path d="M1006 467 l20 -6" stroke="#2a3a90"/>
<path d="M1006 374 l20 -6" stroke="#0a0a28"/>
<path d="M1006 322 l20 -8" stroke="#0a0a28"/>
<path d="M1006 314 l20 -8" stroke="#2a3a90"/>
</g>
<path d="M1009 262 l15 6" stroke="#c08030" stroke-width="2" opacity=".6"/>
<circle cx="1013.1" cy="652.9" r=".5" fill="#cfcfe8" opacity="0.30"/>
<circle cx="1011.7" cy="589.6" r=".5" fill="#cfcfe8" opacity="0.70"/>
<circle cx="1016.1" cy="600.7" r=".5" fill="#cfcfe8" opacity="0.70"/>
<circle cx="1013.7" cy="509.2" r=".5" fill="#cfcfe8" opacity="0.70"/>
<circle cx="1022.6" cy="687.4" r=".5" fill="#cfcfe8" opacity="0.30"/>
<circle cx="1019.6" cy="548.6" r=".5" fill="#cfcfe8" opacity="0.70"/>
<circle cx="1016.2" cy="659.8" r=".5" fill="#cfcfe8" opacity="0.70"/>
<circle cx="1023.9" cy="573.7" r=".5" fill="#cfcfe8" opacity="0.30"/>
<circle cx="1010.9" cy="710.1" r=".5" fill="#cfcfe8" opacity="0.70"/>
<circle cx="1023.3" cy="712.7" r=".5" fill="#cfcfe8" opacity="0.70"/>
<circle cx="1012.6" cy="558.3" r=".5" fill="#cfcfe8" opacity="0.30"/>
<circle cx="1022.5" cy="562.9" r=".5" fill="#cfcfe8" opacity="0.30"/>
<circle cx="1015.7" cy="566.2" r=".5" fill="#cfcfe8" opacity="0.70"/>
<circle cx="1017.7" cy="533.2" r=".5" fill="#cfcfe8" opacity="0.50"/>
<circle cx="1020.5" cy="617.1" r=".5" fill="#cfcfe8" opacity="0.50"/>
<circle cx="1023.3" cy="637.6" r=".5" fill="#cfcfe8" opacity="0.70"/>
<circle cx="1013.9" cy="645.6" r=".5" fill="#cfcfe8" opacity="0.30"/>
<circle cx="1012.9" cy="714.2" r=".5" fill="#cfcfe8" opacity="0.30"/>
<circle cx="1012.4" cy="716.3" r=".5" fill="#cfcfe8" opacity="0.30"/>
<circle cx="1022.9" cy="690.1" r=".5" fill="#cfcfe8" opacity="0.70"/>
<circle cx="1021.3" cy="629.7" r=".5" fill="#cfcfe8" opacity="0.30"/>
<circle cx="1022.2" cy="710.7" r=".5" fill="#cfcfe8" opacity="0.70"/>
<circle cx="1021.6" cy="514.6" r=".5" fill="#cfcfe8" opacity="0.30"/>
<circle cx="1016.7" cy="670.3" r=".5" fill="#cfcfe8" opacity="0.30"/>
<circle cx="1022.4" cy="723.0" r=".5" fill="#cfcfe8" opacity="0.50"/>
<circle cx="1021.8" cy="548.9" r=".5" fill="#cfcfe8" opacity="0.50"/>
<ellipse cx="1021.500" cy="622" rx="3.500" ry="2.800" fill="#e02a8a"/>
</svg><svg width="0" height="0" style="position:absolute"><defs><path id="p-wrench" d="M23.200 6.200 A6.300 6.300 0 0 1 14.600 13 L6 21.800 A2.300 2.300 0 0 1 2.700 18.500 L11.400 9.800 A6.300 6.300 0 0 1 18.300 1.300 L14.700 5 L15.300 8.600 L19 9.300 L22.600 5.700 Z" stroke-linejoin="round"/></defs></svg>
<div id="desk">
<div class="a" style="left:0;top:5px;width:78px;height:70px;background:rgba(255,255,255,.13);border-radius:0 3px 3px 0"></div>
<svg class="ic" style="left:14px;top:5.7px" width="50" height="50" ><use href="#i-adm"/></svg>
<span class="t dt" style="left:21.9px;top:59px;transform:scaleX(1.029);">Admin</span>
<svg class="ic" style="left:14px;top:105.2px" width="50" height="50" ><use href="#i-pc"/></svg>
<span class="t dt" style="left:20.3px;top:158.3px;transform:scaleX(0.904);">This PC</span>
<svg class="ic" style="left:14px;top:203.8px" width="50" height="50" ><use href="#i-bin"/></svg>
<span class="t dt" style="left:9.9px;top:256.7px;transform:scaleX(0.928);">Recycle Bin</span>
<svg class="ic" style="left:14px;top:303.2px" width="50" height="50" ><use href="#i-cp"/></svg>
<span class="t dt" style="left:4px;top:355.7px;transform:scaleX(0.969);">Control Panel</span>
<svg class="ic" style="left:15.1px;top:403.3px" width="48" height="48" ><use href="#i-act"/></svg>
<span class="t dt" style="left:5.7px;top:455.7px;transform:scaleX(0.971);">Activator-E...</span>
<svg class="ic" style="left:0;top:22px" width="14" height="22" viewBox="0 0 14 22"><path d="M1 1.500 V18 L5 14.200 L7.800 20.500 L10.300 19.400 L7.500 13.200 H12.800 Z" fill="#fff" stroke="#111" stroke-width="1"/></svg>
<svg class="ic" style="left:8px;top:616px" width="40" height="42" viewBox="0 0 40 42"><circle cx="18.500" cy="23.500" r="12.200" fill="none" stroke="#fff" stroke-width="4.400"/><rect x="2" y="30" width="10" height="2.300" fill="#0c0b28"/><rect x="4.600" y="25.400" width="14" height="4.600" fill="#fff"/><circle cx="18.500" cy="8.500" r="4.400" fill="#0a0a20"/><circle cx="18.500" cy="8.500" r="3" fill="#ecc05a"/><circle cx="18.500" cy="22.900" r="4.600" fill="#0c0b28" stroke="#fff" stroke-width="3"/></svg>
<span class="t " style="left:44.3px;top:623.2px;line-height:18px;height:18px;transform:scaleX(0.958);color:#fff;font-weight:bold;font-size:16.500px;-webkit-text-stroke:.5px #fff;">FARESCD</span>
<span class="t" style="left:44px;top:640px;width:77px;text-align:right;direction:rtl;color:#fff;font-weight:bold;-webkit-text-stroke:.3px #fff;font-size:8.400px;font-family:'DejaVu Sans','Liberation Sans',sans-serif">فارس للإسطوانات</span>
</div>
<div id="win"><div id="winin"><div id="pg">
<svg class="ic" style="left:138px;top:6.5px" width="16" height="16" ><use href="#i-pc"/></svg>
<div class="sep" style="left:161px;top:10px;height:12px;background:#a6a6a6"></div>
<svg class="ic" style="left:170px;top:6px" width="18" height="18" viewBox="0 0 26 26"><use href="#p-wrench" fill="none" stroke="#4a4a4a" stroke-width="1.650"/></svg>
<svg class="ic" style="left:192px;top:7px" width="20" height="18" viewBox="0 0 20 18"><path d="M1.500 3.500 a1.500 1.500 0 0 1 1.500 -1.500 h3.500 l1.800 2 h6.700 a1.500 1.500 0 0 1 1.500 1.500 v7 a1.500 1.500 0 0 1 -1.500 1.500 h-12 a1.500 1.500 0 0 1 -1.500 -1.500 z" fill="#e9eef6" stroke="#9aa8bd" stroke-width="1.100"/><path d="M1.500 6.200 h6 l1.500 -1.500" fill="none" stroke="#9aa8bd" stroke-width="1"/><circle cx="14.300" cy="12.300" r="4.200" fill="#7f93b3"/><path d="M14.300 10 v4.600 M12 12.300 h4.600" stroke="#fff" stroke-width="1.100"/></svg>
<svg class="ic" style="left:214px;top:13px" width="9" height="6" viewBox="0 0 9 6"><path d="M1 1 L4.500 4.500 L8 1" fill="none" stroke="#333" stroke-width="1.300"/></svg>
<div class="sep" style="left:231px;top:10px;height:12px;background:#a6a6a6"></div>
<span class="t " style="left:239px;top:8.3px;transform:scaleX(0.97);">This PC</span>
<div class="a" style="left:890px;top:14.500px;width:10px;height:1.300px;background:#111"></div>
<div class="a" style="left:935px;top:10px;width:10px;height:10px;border:1.300px solid #111;border-radius:1.500px"></div>
<svg class="ic" style="left:980px;top:9px" width="12" height="12" viewBox="0 0 12 12"><path d="M1 1 L11 11 M11 1 L1 11" stroke="#111" stroke-width="1.300"/></svg>
<span class="t " style="left:149.3px;top:36.3px;transform:scaleX(0.936);">File</span>
<span class="t " style="left:200.3px;top:36.3px;transform:scaleX(0.992);">Computer</span>
<div class="a" style="left:196px;top:50px;width:59px;height:2px;background:#1b6fb3;border-radius:1px"></div>
<span class="t " style="left:280.5px;top:36.3px;transform:scaleX(0.983);">View</span>
<svg class="ic" style="left:970px;top:38px" width="12" height="8" viewBox="0 0 12 8"><path d="M1 7 L6 1.500 L11 7" fill="none" stroke="#9a9a9a" stroke-width="1.400"/></svg>
<svg class="ic" style="left:991px;top:35px" width="13" height="13" viewBox="0 0 13 13"><path d="M6.500 1 V12 M1 6.500 H12" stroke="#8a8a8a" stroke-width="1.200"/></svg>
<div class="a" style="left:130px;top:54px;width:879px;height:92px;background:#f9f9f9;border-top:1px solid #ededed;border-bottom:1px solid #ebebeb"></div>
<svg class="ic" style="left:150.500px;top:66px" width="27.500" height="27.500" viewBox="0 0 26 26"><use href="#p-wrench" fill="none" stroke="#4a4a4a" stroke-width="1.350"/></svg>
<span class="t rb" style="left:138.2px;top:97px;transform:scaleX(0.973);">Properties</span>
<svg class="ic" style="left:200px;top:64px" width="26" height="27" viewBox="0 0 26 27"><path d="M7 2.500 h8.500 l6.500 6.500 v13 a2 2 0 0 1 -2 2 h-5" fill="#e3e9f2" stroke="#a3b2c9" stroke-width="1.200"/><path d="M5 10 V4.500 a2 2 0 0 1 2 -2" fill="none" stroke="#a3b2c9" stroke-width="1.200"/><path d="M15.500 2.500 v5 a1.500 1.500 0 0 0 1.500 1.500 h5" fill="#f2f5fa" stroke="#a3b2c9" stroke-width="1.200"/><circle cx="8.500" cy="19" r="6.800" fill="#8fa1bd"/><path d="M5.800 21.700 L11 16.500 M7 16.200 h4.300 v4.300" fill="none" stroke="#fff" stroke-width="1.300"/></svg>
<span class="t g" style="left:199.9px;top:97px;transform:scaleX(0.966);">Open</span>
<svg class="ic" style="left:244px;top:64px" width="28" height="28" viewBox="0 0 28 28"><path d="M15.500 6 H5 a3 3 0 0 0 -3 3 v10 a3 3 0 0 0 3 3 h10.500 M20.500 6 h2.500 a3 3 0 0 1 3 3 v10 a3 3 0 0 1 -3 3 h-2.500" fill="#e6ecf5" stroke="#a3b2c9" stroke-width="1.300"/><path d="M18 2.500 v23 M15 2.500 h6 M15 25.500 h6" stroke="#a3b2c9" stroke-width="1.300" fill="none"/><path d="M6 19 L10 8.500 L14 19 M7.400 15.500 h5.200" fill="none" stroke="#a3b2c9" stroke-width="1.300"/></svg>
<span class="t g" style="left:237.8px;top:97px;transform:scaleX(0.906);">Rename</span>
<span class="t lb" style="left:186.6px;top:130px;transform:scaleX(0.981);">Location</span>
<div class="sep" style="left:287px;top:57px;height:87px"></div>
<svg class="ic" style="left:300px;top:63px" width="30" height="30" viewBox="0 0 30 30"><rect x="9.500" y="3.200" width="10.500" height="15" rx="2.200" fill="none" stroke="#3d3d3d" stroke-width="1.200"/><circle cx="14.700" cy="13.800" r=".9" fill="#3d3d3d"/><path d="M14.700 18.200 v3" stroke="#3d3d3d" stroke-width="1.100"/><path d="M3 24.8 H26.5" stroke="#3d3d3d" stroke-width="1.100"/><path d="M10.7 25.7 l2.600 -3.400 h2.800 l2.600 3.400 z" fill="#bfe9f7" stroke="#2a9fd0" stroke-width="1.100" stroke-linejoin="round"/></svg>
<span class="t rb" style="left:298.3px;top:97.2px;transform:scaleX(0.862);">Access</span>
<span class="t rb" style="left:294.6px;top:110.2px;transform:scaleX(0.941);">media</span>
<svg class="ic" style="left:329px;top:115.500px" width="7" height="5" viewBox="0 0 7 5"><path d="M.800 1 L3.500 3.800 L6.200 1" fill="none" stroke="#333" stroke-width="1.100"/></svg>
<svg class="ic" style="left:359px;top:63px" width="30" height="30" viewBox="0 0 30 30"><rect x="4.200" y="6.300" width="22" height="8.200" rx="3" fill="none" stroke="#3d3d3d" stroke-width="1.200"/><circle cx="21.800" cy="10.400" r=".9" fill="#3d3d3d"/><path d="M15.200 14.500 v3.200" stroke="#3d3d3d" stroke-width="1.100"/><path d="M4 21.4 H26.5" stroke="#3d3d3d" stroke-width="1.100"/><path d="M11.2 22.3 l2.600 -3.400 h2.800 l2.600 3.400 z" fill="#bfe9f7" stroke="#2a9fd0" stroke-width="1.100" stroke-linejoin="round"/></svg>
<span class="t rb" style="left:340.6px;top:97.2px;transform:scaleX(1.02);">Map network</span>
<span class="t rb" style="left:357.8px;top:110.2px;transform:scaleX(0.939);">drive</span>
<svg class="ic" style="left:385px;top:115.500px" width="7" height="5" viewBox="0 0 7 5"><path d="M.800 1 L3.500 3.800 L6.200 1" fill="none" stroke="#333" stroke-width="1.100"/></svg>
<svg class="ic" style="left:436px;top:63px" width="30" height="30" viewBox="0 0 30 30"><path d="M22 8.500 h1.500 a2 2 0 0 1 2 2 v6.500 a2 2 0 0 1 -2 2 h-13" fill="none" stroke="#3d3d3d" stroke-width="1.200"/><rect x="5.600" y="4.800" width="16.200" height="10.800" rx="2" fill="#f9f9f9" stroke="#3d3d3d" stroke-width="1.200"/><path d="M15.200 19 v2.200" stroke="#3d3d3d" stroke-width="1.100"/><path d="M4 24.8 H26.5" stroke="#3d3d3d" stroke-width="1.100"/><path d="M11.2 25.7 l2.600 -3.400 h2.800 l2.600 3.400 z" fill="#bfe9f7" stroke="#2a9fd0" stroke-width="1.100" stroke-linejoin="round"/></svg>
<span class="t rb" style="left:414.3px;top:97.2px;transform:scaleX(1.015);">Add a network</span>
<span class="t rb" style="left:431.5px;top:110.2px;transform:scaleX(1.021);">location</span>
<span class="t lb" style="left:370.7px;top:130px;transform:scaleX(1.011);">Network</span>
<div class="sep" style="left:499px;top:57px;height:87px"></div>
<svg class="ic" style="left:514px;top:65px" width="26" height="26" viewBox="0 0 26 26"><path d="M10.700 1.800 h4.600 l.7 3.100 l2.100 1.200 l3 -1 l2.300 4 l-2.300 2.200 v2.400 l2.300 2.200 l-2.300 4 l-3 -1 l-2.100 1.200 l-.7 3.100 h-4.600 l-.7 -3.100 l-2.100 -1.200 l-3 1 l-2.300 -4 l2.300 -2.200 v-2.400 l-2.300 -2.200 l2.300 -4 l3 1 l2.100 -1.200 z" fill="#eaf3fb" stroke="#4a4a4a" stroke-width="1.300" stroke-linejoin="round"/><circle cx="13" cy="13" r="3.700" fill="#cfeefd" stroke="#2a7a9e" stroke-width="1.300"/></svg>
<span class="t rb" style="left:512.7px;top:97.2px;">Open</span>
<span class="t rb" style="left:506.6px;top:110.2px;transform:scaleX(0.978);">Settings</span>
<svg class="ic" style="left:554px;top:62px" width="17" height="16" viewBox="0 0 17 16"><g fill="none" stroke="#2a7a9e" stroke-width="1"><rect x="1.500" y="1.500" width="3" height="3"/><rect x="1.500" y="6.300" width="3" height="3"/><rect x="1.500" y="11" width="3" height="3"/></g><path d="M6.500 3.100 h9 M6.500 7.900 h9 M6.500 12.600 h9" stroke="#3a3a3a" stroke-width="1"/></svg>
<span class="t rb" style="left:573.2px;top:63.2px;transform:scaleX(1.006);">Uninstall or change a program</span>
<svg class="ic" style="left:554px;top:84px" width="16" height="16" viewBox="0 0 16 16"><circle cx="8" cy="8" r="6.800" fill="none" stroke="#4a4a4a" stroke-width="1.100"/><path d="M8 7 v4.500" stroke="#4a4a4a" stroke-width="1.200"/><circle cx="8" cy="4.800" r=".8" fill="#4a4a4a"/></svg>
<span class="t rb" style="left:573.2px;top:85.1px;transform:scaleX(0.961);">System properties</span>
<svg class="ic" style="left:554px;top:106px" width="17" height="17" viewBox="0 0 17 17"><path d="M5 14 h-2 a2 2 0 0 1 -2 -2 v-8.500 a2 2 0 0 1 2 -2 h9.500 a2 2 0 0 1 2 2 v3" fill="none" stroke="#4a4a4a" stroke-width="1.100"/><path d="M1 4.800 h13.500" stroke="#4a4a4a" stroke-width="1"/><rect x="6.500" y="9.500" width="9.500" height="6.500" rx="1" fill="#1f7fc0"/><path d="M9.500 9.500 v-1.500 h3.500 v1.500" fill="none" stroke="#1f7fc0" stroke-width="1.200"/><path d="M6.500 12.500 h9.500" stroke="#bfe3f7" stroke-width=".8"/></svg>
<span class="t rb" style="left:573.2px;top:107.1px;transform:scaleX(0.981);">Manage</span>
<span class="t lb" style="left:601.3px;top:130px;transform:scaleX(0.885);">System</span>
<div class="sep" style="left:740px;top:57px;height:87px"></div>
<div class="a" style="left:130px;top:200px;width:879px;height:1px;background:#e5e5e5"></div>
<svg class="ic" style="left:144px;top:167px" width="14" height="14" viewBox="0 0 14 14"><path d="M13 7 H1.500 M6.500 2 L1.500 7 L6.500 12" fill="none" stroke="#a6a6a6" stroke-width="1.100"/></svg>
<svg class="ic" style="left:179px;top:167px" width="14" height="14" viewBox="0 0 14 14"><path d="M1 7 H12.500 M7.500 2 L12.500 7 L7.500 12" fill="none" stroke="#a6a6a6" stroke-width="1.100"/></svg>
<svg class="ic" style="left:212px;top:171px" width="9" height="6" viewBox="0 0 9 6"><path d="M1 1 L4.500 4.500 L8 1" fill="none" stroke="#a6a6a6" stroke-width="1.100"/></svg>
<svg class="ic" style="left:238px;top:167px" width="14" height="14" viewBox="0 0 14 14"><path d="M7 13 V1.500 M2 6.500 L7 1.500 L12 6.500" fill="none" stroke="#5e5e5e" stroke-width="1.100"/></svg>
<div class="box" style="left:267px;top:157px;width:516px;height:34px"></div>
<svg class="ic" style="left:276px;top:166px" width="16" height="16" ><use href="#i-pc"/></svg>
<svg class="ic" style="left:297px;top:170px" width="6" height="9" viewBox="0 0 6 9"><path d="M1.500 1.500 L4.300 4.500 L1.500 7.500" fill="none" stroke="#444" stroke-width="1.150"/></svg>
<span class="t " style="left:313px;top:167px;transform:scaleX(0.953);">This PC</span>
<svg class="ic" style="left:361px;top:170px" width="6" height="9" viewBox="0 0 6 9"><path d="M1.500 1.500 L4.300 4.500 L1.500 7.500" fill="none" stroke="#444" stroke-width="1.150"/></svg>
<svg class="ic" style="left:732px;top:169px" width="10" height="7" viewBox="0 0 10 7"><path d="M1 1.200 L5 5.200 L9 1.200" fill="none" stroke="#5a5a5a" stroke-width="1.200"/></svg>
<svg class="ic" style="left:760px;top:165px" width="14" height="14" viewBox="0 0 14 14"><path d="M11.800 5 A5.300 5.300 0 1 0 12.300 7.800" fill="none" stroke="#5a5a5a" stroke-width="1.200"/><path d="M12.300 1.500 V5.200 H8.600" fill="none" stroke="#5a5a5a" stroke-width="1.200"/></svg>
<div class="box" style="left:795px;top:157px;width:202px;height:34px"></div>
<span class="t sub" style="left:804.2px;top:167px;transform:scaleX(0.957);">Search This PC</span>
<svg class="ic" style="left:969px;top:167px" width="16" height="16" viewBox="0 0 16 16"><circle cx="6.300" cy="6.300" r="4.800" fill="none" stroke="#5a5a5a" stroke-width="1.200"/><path d="M9.800 9.800 L14.500 14.500" stroke="#5a5a5a" stroke-width="1.200"/></svg>
<div class="a" style="left:130px;top:201px;width:879px;height:526px;background:#fff;overflow:hidden">
<svg class="ic" style="left:0;top:0" width="879" height="526" viewBox="130 201 879 526"><defs><mask id="wm"><rect x="130" y="180" width="879" height="560" fill="#000"/><circle cx="458" cy="382" r="187" fill="#fff"/><circle cx="458" cy="384" r="128" fill="#000"/><rect x="260" y="462.500" width="198" height="49.500" fill="#000"/><rect x="300" y="425" width="158" height="37.500" fill="#fff"/><circle cx="458" cy="382.500" r="78.500" fill="#fff"/><circle cx="458" cy="382.500" r="41.300" fill="#000"/><circle cx="457" cy="195.500" r="48" fill="#000"/></mask></defs><rect x="130" y="180" width="879" height="560" fill="#ebedfb" mask="url(#wm)"/></svg>
</div>
<div class="sep" style="left:288px;top:201px;height:503px;background:#f6f6f6"></div>
<svg class="ic" style="left:163.5px;top:215px" width="17" height="17" ><use href="#i-desk"/></svg>
<span class="t " style="left:185.3px;top:216.8px;">Desktop</span>
<svg class="ic" style="left:272px;top:218.5px" width="11" height="11"><use href="#i-pin"/></svg>
<svg class="ic" style="left:163.5px;top:247.1px" width="17" height="17" ><use href="#i-dl"/></svg>
<span class="t " style="left:185.3px;top:248.9px;transform:scaleX(1.022);">Downloads</span>
<svg class="ic" style="left:272px;top:250.6px" width="11" height="11"><use href="#i-pin"/></svg>
<svg class="ic" style="left:163.5px;top:279.2px" width="17" height="17" ><use href="#i-doc"/></svg>
<span class="t " style="left:185.3px;top:281px;transform:scaleX(1.035);">Documents</span>
<svg class="ic" style="left:272px;top:282.7px" width="11" height="11"><use href="#i-pin"/></svg>
<svg class="ic" style="left:163.5px;top:311.3px" width="17" height="17" ><use href="#i-pic"/></svg>
<span class="t " style="left:185.3px;top:313.1px;transform:scaleX(0.995);">Pictures</span>
<svg class="ic" style="left:272px;top:314.8px" width="11" height="11"><use href="#i-pin"/></svg>
<svg class="ic" style="left:163.5px;top:343.3px" width="17" height="17" ><use href="#i-mus"/></svg>
<span class="t " style="left:185.3px;top:345.1px;transform:scaleX(1.017);">Music</span>
<svg class="ic" style="left:272px;top:346.8px" width="11" height="11"><use href="#i-pin"/></svg>
<svg class="ic" style="left:163.5px;top:375.3px" width="17" height="17" ><use href="#i-vid"/></svg>
<span class="t " style="left:185.3px;top:377.1px;transform:scaleX(0.982);">Videos</span>
<svg class="ic" style="left:272px;top:378.8px" width="11" height="11"><use href="#i-pin"/></svg>
<div class="hl" style="left:140px;top:416px;width:138px"></div>
<div class="a" style="left:132px;top:432px;width:154px;height:32px;background:rgba(0,0,0,.055)"></div>
<svg class="ic" style="left:143px;top:442.5px" width="7" height="10" viewBox="0 0 7 10"><path d="M1.200 1 L5.500 5 L1.200 9" fill="none" stroke="#6a6a6a" stroke-width="1.200"/></svg>
<svg class="ic" style="left:164px;top:439.5px" width="16" height="16" ><use href="#i-pc"/></svg>
<span class="t " style="left:185.5px;top:440.6px;transform:scaleX(0.946);">This PC</span>
<svg class="ic" style="left:143px;top:474.5px" width="7" height="10" viewBox="0 0 7 10"><path d="M1.200 1 L5.500 5 L1.200 9" fill="none" stroke="#6a6a6a" stroke-width="1.200"/></svg>
<svg class="ic" style="left:164px;top:472px" width="16" height="16"><use href="#i-h2"/></svg>
<div class="a" style="left:171px;top:484.500px;width:8px;height:1.500px;background:#9aa0ac;opacity:.8"></div>
<div class="a" style="left:185px;top:470px;width:101px;height:20px;overflow:hidden"><span class="t " style="left:0.5px;top:2.8px;transform:scaleX(0.957);">DVD Drive (D:)</span><span class="t " style="left:80.5px;top:2.3px;font-size:15px;">◦</span><span class="t " style="left:90px;top:2.8px;transform:scaleX(0.966);">H2OS</span></div>
<div class="hl" style="left:140px;top:512px;width:138px"></div>
<svg class="ic" style="left:164px;top:536px" width="16" height="16"><use href="#i-home"/></svg>
<span class="t " style="left:185.5px;top:536.9px;transform:scaleX(1.051);">Home</span>
<svg class="ic" style="left:296px;top:217.5px" width="11" height="7" viewBox="0 0 11 7"><path d="M1 1 L5.500 5.500 L10 1" fill="none" stroke="#7a7a7a" stroke-width="1.100"/></svg>
<span class="t hd" style="left:311px;top:211.8px;line-height:18px;height:18px;transform:scaleX(0.986);">Folders</span>
<svg class="ic" style="left:308px;top:238px" width="48" height="48" ><use href="#i-doc"/></svg>
<span class="t " style="left:361px;top:246.2px;transform:scaleX(1.035);">Documents</span>
<svg class="ic" style="left:308px;top:293.7px" width="48" height="48" ><use href="#i-mus"/></svg>
<span class="t " style="left:361px;top:302.2px;transform:scaleX(1.04);">Music</span>
<svg class="ic" style="left:308px;top:349.5px" width="48" height="48" ><use href="#i-vid"/></svg>
<span class="t " style="left:361px;top:358.2px;transform:scaleX(0.993);">Videos</span>
<svg class="ic" style="left:562px;top:237px" width="48" height="48" ><use href="#i-dl"/></svg>
<span class="t " style="left:615px;top:246.2px;transform:scaleX(1.027);">Downloads</span>
<svg class="ic" style="left:562px;top:293.7px" width="48" height="48" ><use href="#i-pic"/></svg>
<span class="t " style="left:615px;top:302.2px;">Pictures</span>
<svg class="ic" style="left:562px;top:350px" width="48" height="48" ><use href="#i-desk"/></svg>
<span class="t " style="left:615px;top:358.2px;">Desktop</span>
<svg class="ic" style="left:296px;top:412.5px" width="11" height="7" viewBox="0 0 11 7"><path d="M1 1 L5.500 5.500 L10 1" fill="none" stroke="#7a7a7a" stroke-width="1.100"/></svg>
<span class="t hd" style="left:311px;top:406.8px;line-height:18px;height:18px;">Devices and drives</span>
<svg class="ic" style="left:308px;top:433px" width="48" height="48" ><use href="#i-disk"/></svg>
<span class="t " style="left:361px;top:433.7px;transform:scaleX(0.98);">Local Disk (C:)</span>
<div class="a" style="left:360px;top:450px;width:189px;height:12.500px;background:#e6e6e6;border:1px solid #bcbcbc"><div style="width:38.500px;height:100%;background:#26a0da"></div></div>
<span class="t sub" style="left:361px;top:464.9px;transform:scaleX(0.945);">47.1 GB free of 59.8 GB</span>
<svg class="ic" style="left:561.500px;top:433px" width="48" height="48"><use href="#i-h2"/></svg>
<span class="t" style="left:576.500px;top:463px;font-size:8.600px;line-height:10px;height:10px;letter-spacing:-.4px;color:#9c9ca8">H2<b style="color:#353a4c">OS</b></span>
<span class="t " style="left:615px;top:433.9px;transform:scaleX(0.964);">DVD Drive (D:)</span>
<span class="t " style="left:695.5px;top:433.4px;font-size:15px;">◦</span>
<span class="t " style="left:705px;top:433.9px;transform:scaleX(0.966);">H2OS</span>
<span class="t " style="left:738.8px;top:433.4px;font-size:15px;">◦</span>
<span class="t sub" style="left:615px;top:449.9px;transform:scaleX(0.968);">0 bytes free of 4.24 GB</span>
<span class="t sub" style="left:615px;top:465.2px;transform:scaleX(0.936);">UDF</span>
<span class="t " style="left:144px;top:707.9px;transform:scaleX(1.017);color:#3a3a3a">8 items</span>
<div class="sep" style="left:192px;top:707px;height:16px;background:#ececec"></div>
<svg class="ic" style="left:962px;top:709px" width="13" height="12" viewBox="0 0 13 12"><path d="M.500 1.500 h12 M.500 4.500 h12 M.500 7.500 h12 M.500 10.500 h12" stroke="#444" stroke-width="1"/></svg>
<svg class="ic" style="left:986px;top:708px" width="14" height="14" viewBox="0 0 14 14"><rect x="1.500" y="1.500" width="11" height="8.500" fill="none" stroke="#444" stroke-width="1"/><path d="M1 12.500 h12" stroke="#444" stroke-width="1"/></svg>
</div></div></div>
<div id="taskbar"></div>
<svg class="ic" style="left:305px;top:736px" width="23" height="23" viewBox="0 0 23 23"><g fill="#2a0f18" stroke-width="1.600"><rect x="1.500" y="1.500" width="8" height="8" rx="1.500" stroke="#f0c0a0"/><rect x="13" y="1.500" width="8" height="8" rx="1.500" stroke="#f07aa0"/><rect x="1.500" y="13" width="8" height="8" rx="1.500" stroke="#f0d0b0"/><rect x="13" y="13" width="8" height="8" rx="1.500" stroke="#f08aa8"/></g></svg>
<div class="a" style="left:343px;top:732px;width:221px;height:32px;border-radius:16px;background:#8b8b8b"></div>
<svg class="ic" style="left:353px;top:738px" width="18" height="19" viewBox="0 0 18 19"><circle cx="7.800" cy="7.800" r="5.800" fill="none" stroke="#2d2d2d" stroke-width="1.700"/><path d="M12 12.300 L16.500 17" stroke="#2d2d2d" stroke-width="1.900"/></svg>
<span class="t " style="left:380.5px;top:739.8px;line-height:16px;height:16px;transform:scaleX(1.025);color:#7e7e80;font-size:13.400px">Search</span>
<div class="a" style="left:570px;top:728.500px;width:158px;height:37.500px;border-radius:2px 2px 5px 5px;background:linear-gradient(90deg,#1f4250 0%,#26344c 45%,#34285a 85%,#3a245e 100%)"></div>
<div class="a" style="left:574px;top:764px;width:150px;height:2px;border-radius:1px;background:linear-gradient(90deg,#5fd0d8 0%,#6f8fe0 50%,#8a5fd0 100%)"></div>
<svg class="ic" style="left:579.5px;top:736px" width="23" height="23" ><use href="#i-pc"/></svg>
<span class="t " style="left:607.7px;top:740.3px;transform:scaleX(0.941);color:#0e161c">This PC</span>
<svg class="ic" style="left:824px;top:738.500px" width="18" height="20" viewBox="0 0 20 22"><path d="M9 1.500 C6 3.500 4 4 1.500 4.200 C1.500 11 3 15.500 9 18.500 C15 15.500 16.500 11 16.500 4.200 C14 4 12 3.500 9 1.500 Z" fill="#3d9be0"/><path d="M9 1.500 C12 3.500 14 4 16.500 4.200 C16.500 11 15 15.500 9 18.500 Z" fill="#67b8f0"/><circle cx="13" cy="15.500" r="5" fill="#1da04a"/><path d="M10.500 15.500 L12.300 17.300 L15.500 14" fill="none" stroke="#fff" stroke-width="1.400"/></svg>
<svg class="ic" style="left:848px;top:739px" width="18" height="18" viewBox="0 0 18 18"><path d="M1.500 6.500 h2.500 l4 -3.500 v12 l-4 -3.500 h-2.500 z" fill="none" stroke="#333" stroke-width="1.100"/><path d="M10.500 6 q1.500 3 0 6 M12.800 4.300 q2.400 4.700 0 9.400 M15 2.800 q3.200 6.200 0 12.400" fill="none" stroke="#333" stroke-width="1"/></svg>
<svg class="ic" style="left:874px;top:738px" width="16" height="20" viewBox="0 0 16 20"><path d="M4 1.500 h5 v5 h-5z M2.500 6.500 h8 v10 a1.500 1.500 0 0 1 -1.500 1.500 h-5 a1.500 1.500 0 0 1 -1.500 -1.500z" fill="none" stroke="#333" stroke-width="1.100"/><circle cx="10.500" cy="13" r="4" fill="#2d2d2d"/></svg>
<svg class="ic" style="left:895px;top:739px" width="20" height="18" viewBox="0 0 20 18"><path d="M12 2 h-10 v10.500 h13.500 v-6" fill="none" stroke="#333" stroke-width="1.100"/><path d="M8.500 12.500 v3 M4.500 15.800 h8" stroke="#333" stroke-width="1.100"/><rect x="12.500" y="1" width="5" height="5" fill="none" stroke="#333" stroke-width="1"/></svg>
<span class="t " style="left:924.7px;top:733.5px;transform:scaleX(0.939);color:#2e2f33;font-size:12px">1:48:02 AM</span>
<span class="t " style="left:928px;top:749.3px;transform:scaleX(0.965);color:#2e2f33;font-size:12px">1/26/2026</span>
<svg class="ic" style="left:990px;top:739px" width="16" height="18" viewBox="0 0 16 18"><path d="M3 12.500 v-5 a5 5 0 0 1 10 0 v5 l1.500 1.500 h-13z" fill="none" stroke="#2f3034" stroke-width="1.200"/><path d="M6.500 15.500 a1.600 1.600 0 0 0 3 0" fill="none" stroke="#2f3034" stroke-width="1.100"/></svg>
</body>
</html>
